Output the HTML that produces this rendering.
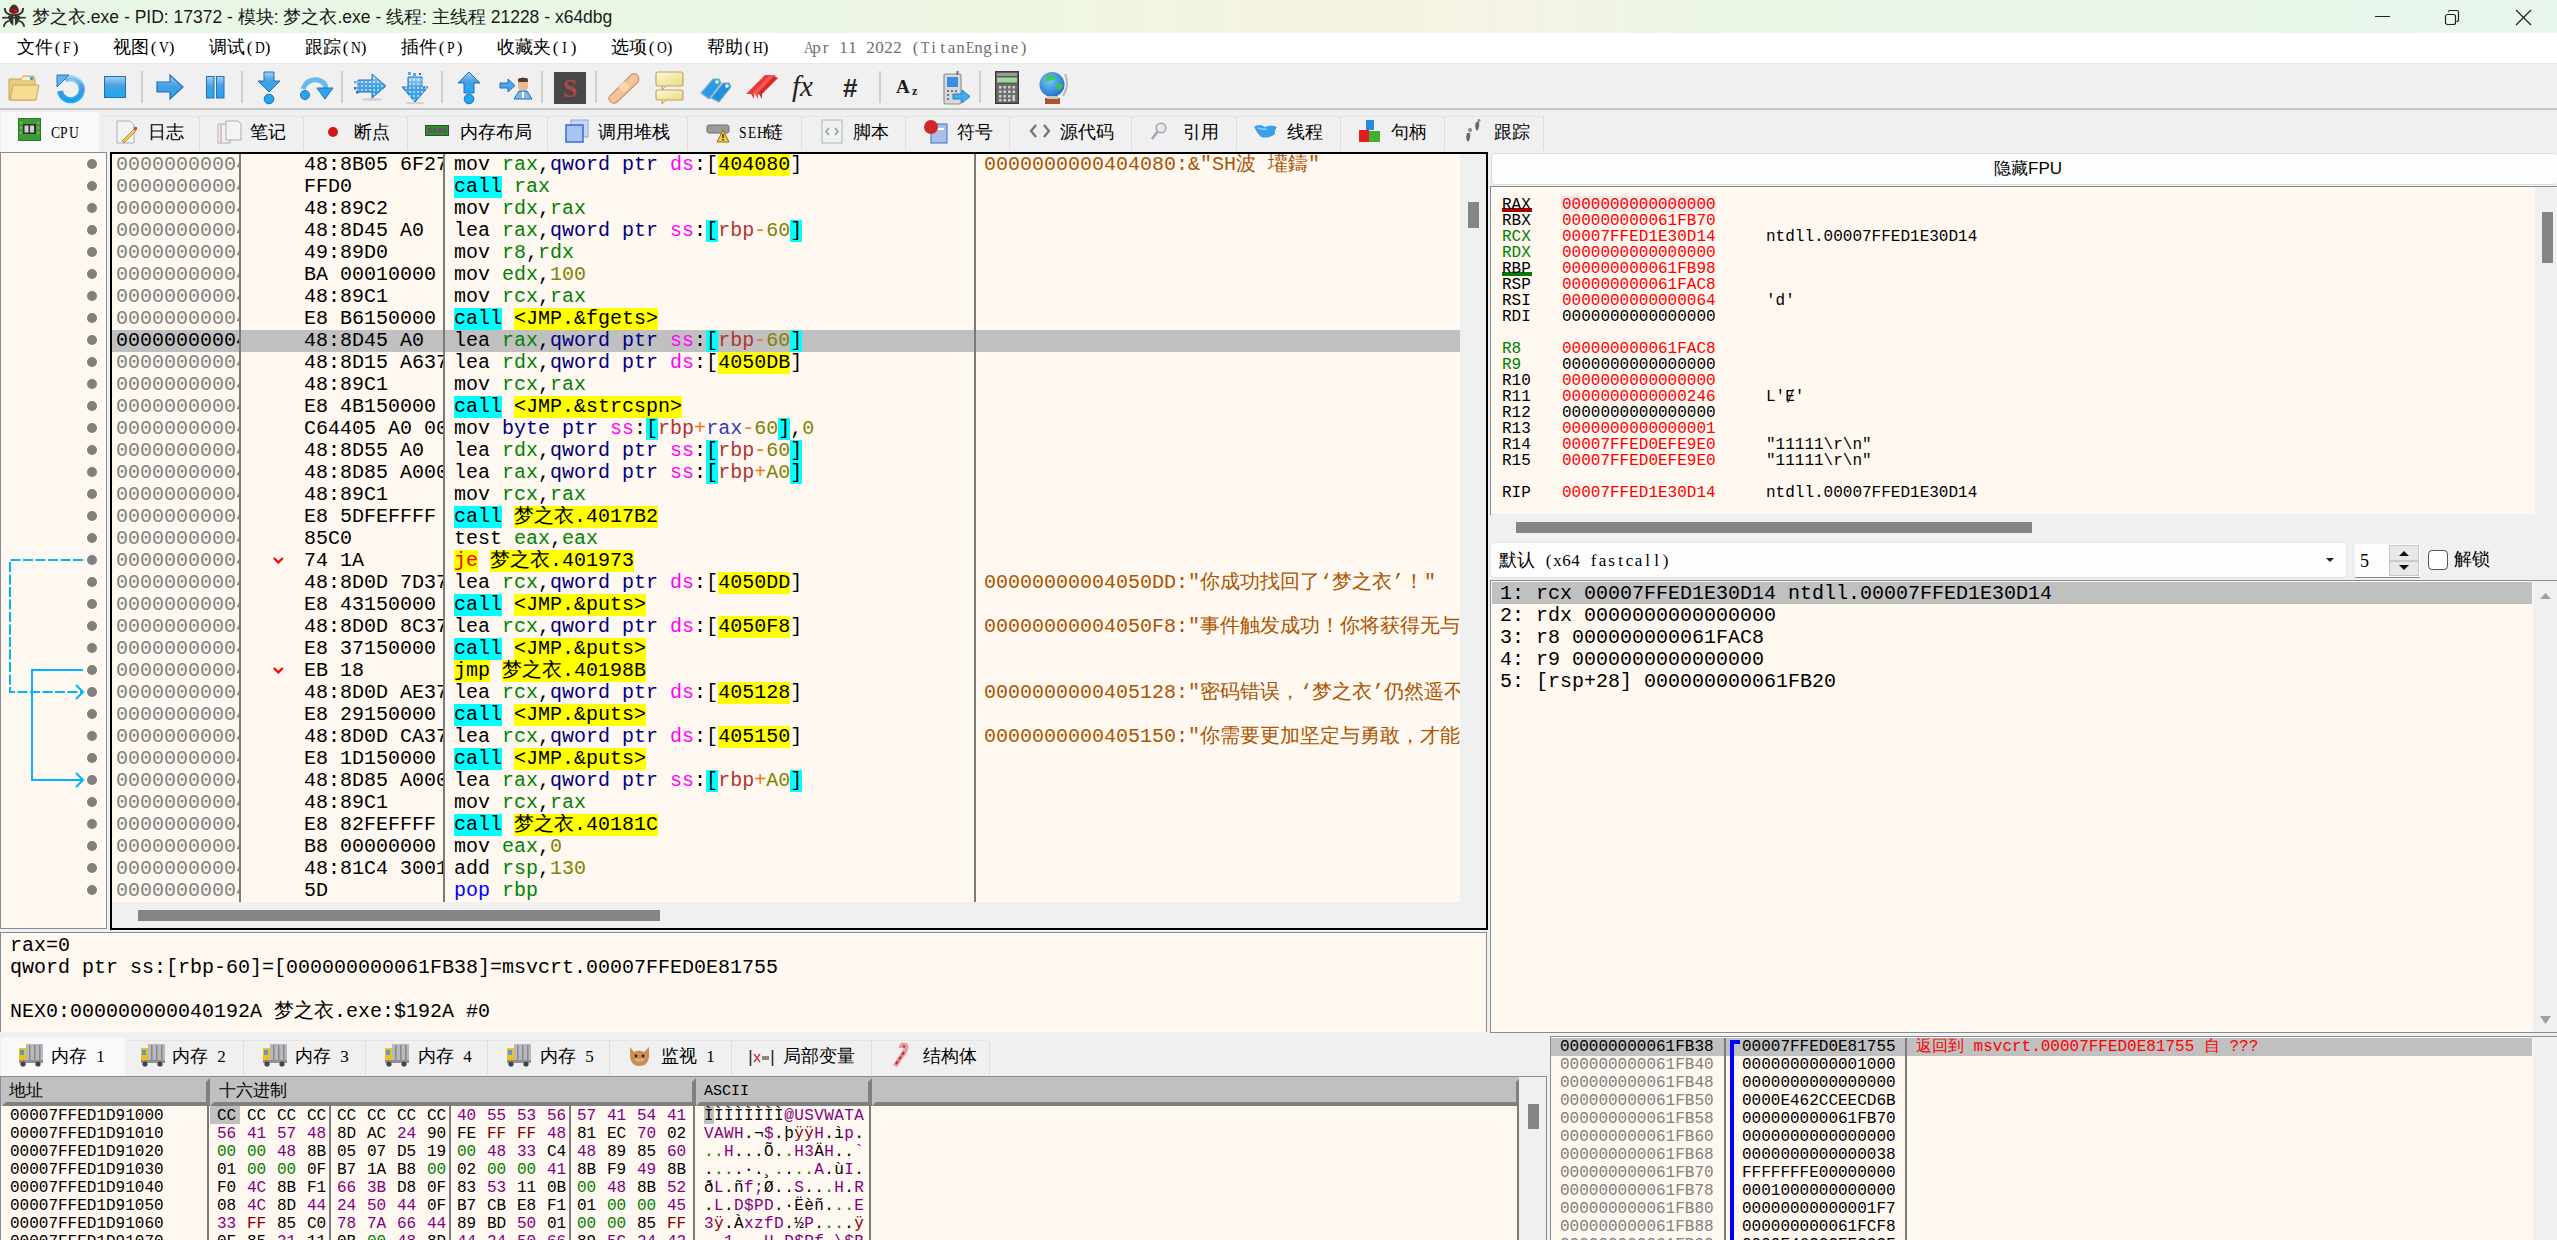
<!DOCTYPE html>
<html><head><meta charset="utf-8"><title>x64dbg</title>
<style>
html,body{margin:0;padding:0;}
body{width:2557px;height:1240px;position:relative;overflow:hidden;background:#f0f0f0;font-family:'Liberation Mono',monospace;}
body>div,body>svg{position:absolute;white-space:pre;}
svg{overflow:visible}
</style></head><body>
<div style="left:0px;top:0px;width:2557px;height:33px;background:linear-gradient(90deg,#e8f6e6 0px,#eaf7e4 640px,#eef6e1 1050px,#f6f2e0 1360px,#f4f3e4 1520px,#ebf6e6 1720px,#e8f6ec 2557px);"></div>
<svg style="left:0px;top:0px;" width="30" height="33" viewBox="0 0 30 33">
<path d="M14 4.6 Q11.5 4.8 10.2 7.2 Q9 9 9.1 10.6 Q9.6 13.9 14 13.9 Q18.4 13.9 18.9 10.6 Q19 9 17.8 7.2 Q16.5 4.8 14 4.6 Z" fill="#353535"/>
<ellipse cx="12.5" cy="11" rx="1.8" ry="2.1" fill="#e80000"/><ellipse cx="15.9" cy="10.6" rx="1.7" ry="2.1" fill="#f00000"/><circle cx="12.4" cy="11.4" r="0.6" fill="#400"/>
<path d="M4.7 8 Q5 15.2 14 15.2 Q23 15.2 23.2 8" stroke="#353535" stroke-width="2" fill="none"/>
<path d="M8 15.8 H13.3 V25.8 Q8.6 23 8 15.8 Z M14.9 15.8 H20.2 Q19.6 23 14.9 25.8 Z" fill="#353535"/>
<path d="M2.1 17.7 H25.7" stroke="#353535" stroke-width="1.7"/>
<path d="M8.8 20.8 Q4.6 22 3.8 26.8 M19.2 20.8 Q23.4 22 24.2 26.8" stroke="#353535" stroke-width="1.9" fill="none"/>
</svg>
<div style="left:32px;top:5px;font-size:17.5px;line-height:24px;color:#1a1a1a;font-family:'Liberation Sans',sans-serif;">梦之衣.exe - PID: 17372 - 模块: 梦之衣.exe - 线程: 主线程 21228 - x64dbg</div>
<svg style="left:2370px;top:8px;" width="30" height="20" viewBox="0 0 30 20"><path d="M5 8.5 H20" stroke="#222" stroke-width="1"/></svg>
<svg style="left:2440px;top:6px;" width="26" height="24" viewBox="0 0 26 24"><rect x="5.5" y="8.5" width="10" height="10" rx="2" stroke="#222" fill="none" stroke-width="1.2"/><path d="M8.5 6 Q8.5 4.5 10 4.5 H17 Q18.5 4.5 18.5 6 V13.5 Q18.5 15.5 16.5 15.5" stroke="#222" fill="none" stroke-width="1.2"/></svg>
<svg style="left:2510px;top:6px;" width="26" height="24" viewBox="0 0 26 24"><path d="M6 4 L21 19 M21 4 L6 19" stroke="#222" stroke-width="1.3"/></svg>
<div style="left:0px;top:33px;width:2557px;height:30px;background:#ffffff;"></div>
<div style="left:17px;top:36px;font-size:18px;line-height:24px;color:#000;font-family:'Liberation Mono',monospace;white-space:pre"><span style="font-size:18px">文</span><span style="font-size:18px">件</span><span style="display:inline-block;width:9px;text-align:center;font-family:'Liberation Serif',serif;font-size:17px">(</span><span style="display:inline-block;width:9px;text-align:center;font-family:'Liberation Serif',serif;font-size:17px;transform:scaleX(0.8)">F</span><span style="display:inline-block;width:9px;text-align:center;font-family:'Liberation Serif',serif;font-size:17px">)</span></div>
<div style="left:113px;top:36px;font-size:18px;line-height:24px;color:#000;font-family:'Liberation Mono',monospace;white-space:pre"><span style="font-size:18px">视</span><span style="font-size:18px">图</span><span style="display:inline-block;width:9px;text-align:center;font-family:'Liberation Serif',serif;font-size:17px">(</span><span style="display:inline-block;width:9px;text-align:center;font-family:'Liberation Serif',serif;font-size:17px;transform:scaleX(0.8)">V</span><span style="display:inline-block;width:9px;text-align:center;font-family:'Liberation Serif',serif;font-size:17px">)</span></div>
<div style="left:209px;top:36px;font-size:18px;line-height:24px;color:#000;font-family:'Liberation Mono',monospace;white-space:pre"><span style="font-size:18px">调</span><span style="font-size:18px">试</span><span style="display:inline-block;width:9px;text-align:center;font-family:'Liberation Serif',serif;font-size:17px">(</span><span style="display:inline-block;width:9px;text-align:center;font-family:'Liberation Serif',serif;font-size:17px;transform:scaleX(0.8)">D</span><span style="display:inline-block;width:9px;text-align:center;font-family:'Liberation Serif',serif;font-size:17px">)</span></div>
<div style="left:305px;top:36px;font-size:18px;line-height:24px;color:#000;font-family:'Liberation Mono',monospace;white-space:pre"><span style="font-size:18px">跟</span><span style="font-size:18px">踪</span><span style="display:inline-block;width:9px;text-align:center;font-family:'Liberation Serif',serif;font-size:17px">(</span><span style="display:inline-block;width:9px;text-align:center;font-family:'Liberation Serif',serif;font-size:17px;transform:scaleX(0.8)">N</span><span style="display:inline-block;width:9px;text-align:center;font-family:'Liberation Serif',serif;font-size:17px">)</span></div>
<div style="left:401px;top:36px;font-size:18px;line-height:24px;color:#000;font-family:'Liberation Mono',monospace;white-space:pre"><span style="font-size:18px">插</span><span style="font-size:18px">件</span><span style="display:inline-block;width:9px;text-align:center;font-family:'Liberation Serif',serif;font-size:17px">(</span><span style="display:inline-block;width:9px;text-align:center;font-family:'Liberation Serif',serif;font-size:17px;transform:scaleX(0.8)">P</span><span style="display:inline-block;width:9px;text-align:center;font-family:'Liberation Serif',serif;font-size:17px">)</span></div>
<div style="left:497px;top:36px;font-size:18px;line-height:24px;color:#000;font-family:'Liberation Mono',monospace;white-space:pre"><span style="font-size:18px">收</span><span style="font-size:18px">藏</span><span style="font-size:18px">夹</span><span style="display:inline-block;width:9px;text-align:center;font-family:'Liberation Serif',serif;font-size:17px">(</span><span style="display:inline-block;width:9px;text-align:center;font-family:'Liberation Serif',serif;font-size:17px;transform:scaleX(0.8)">I</span><span style="display:inline-block;width:9px;text-align:center;font-family:'Liberation Serif',serif;font-size:17px">)</span></div>
<div style="left:611px;top:36px;font-size:18px;line-height:24px;color:#000;font-family:'Liberation Mono',monospace;white-space:pre"><span style="font-size:18px">选</span><span style="font-size:18px">项</span><span style="display:inline-block;width:9px;text-align:center;font-family:'Liberation Serif',serif;font-size:17px">(</span><span style="display:inline-block;width:9px;text-align:center;font-family:'Liberation Serif',serif;font-size:17px;transform:scaleX(0.8)">O</span><span style="display:inline-block;width:9px;text-align:center;font-family:'Liberation Serif',serif;font-size:17px">)</span></div>
<div style="left:707px;top:36px;font-size:18px;line-height:24px;color:#000;font-family:'Liberation Mono',monospace;white-space:pre"><span style="font-size:18px">帮</span><span style="font-size:18px">助</span><span style="display:inline-block;width:9px;text-align:center;font-family:'Liberation Serif',serif;font-size:17px">(</span><span style="display:inline-block;width:9px;text-align:center;font-family:'Liberation Serif',serif;font-size:17px;transform:scaleX(0.8)">H</span><span style="display:inline-block;width:9px;text-align:center;font-family:'Liberation Serif',serif;font-size:17px">)</span></div>
<div style="left:803px;top:36px;font-size:18px;line-height:24px;color:#6e6e6e;font-family:'Liberation Mono',monospace;"><span style="display:inline-block;width:9px;text-align:center;font-family:'Liberation Serif',serif;font-size:17px;transform:scaleX(0.8)">A</span><span style="display:inline-block;width:9px;text-align:center;font-family:'Liberation Serif',serif;font-size:17px">p</span><span style="display:inline-block;width:9px;text-align:center;font-family:'Liberation Serif',serif;font-size:17px">r</span><span style="display:inline-block;width:9px;text-align:center;font-family:'Liberation Serif',serif;font-size:17px">&nbsp;</span><span style="display:inline-block;width:9px;text-align:center;font-family:'Liberation Serif',serif;font-size:17px">1</span><span style="display:inline-block;width:9px;text-align:center;font-family:'Liberation Serif',serif;font-size:17px">1</span><span style="display:inline-block;width:9px;text-align:center;font-family:'Liberation Serif',serif;font-size:17px">&nbsp;</span><span style="display:inline-block;width:9px;text-align:center;font-family:'Liberation Serif',serif;font-size:17px">2</span><span style="display:inline-block;width:9px;text-align:center;font-family:'Liberation Serif',serif;font-size:17px">0</span><span style="display:inline-block;width:9px;text-align:center;font-family:'Liberation Serif',serif;font-size:17px">2</span><span style="display:inline-block;width:9px;text-align:center;font-family:'Liberation Serif',serif;font-size:17px">2</span><span style="display:inline-block;width:9px;text-align:center;font-family:'Liberation Serif',serif;font-size:17px">&nbsp;</span><span style="display:inline-block;width:9px;text-align:center;font-family:'Liberation Serif',serif;font-size:17px">(</span><span style="display:inline-block;width:9px;text-align:center;font-family:'Liberation Serif',serif;font-size:17px;transform:scaleX(0.8)">T</span><span style="display:inline-block;width:9px;text-align:center;font-family:'Liberation Serif',serif;font-size:17px">i</span><span style="display:inline-block;width:9px;text-align:center;font-family:'Liberation Serif',serif;font-size:17px">t</span><span style="display:inline-block;width:9px;text-align:center;font-family:'Liberation Serif',serif;font-size:17px">a</span><span style="display:inline-block;width:9px;text-align:center;font-family:'Liberation Serif',serif;font-size:17px">n</span><span style="display:inline-block;width:9px;text-align:center;font-family:'Liberation Serif',serif;font-size:17px;transform:scaleX(0.8)">E</span><span style="display:inline-block;width:9px;text-align:center;font-family:'Liberation Serif',serif;font-size:17px">n</span><span style="display:inline-block;width:9px;text-align:center;font-family:'Liberation Serif',serif;font-size:17px">g</span><span style="display:inline-block;width:9px;text-align:center;font-family:'Liberation Serif',serif;font-size:17px">i</span><span style="display:inline-block;width:9px;text-align:center;font-family:'Liberation Serif',serif;font-size:17px">n</span><span style="display:inline-block;width:9px;text-align:center;font-family:'Liberation Serif',serif;font-size:17px">e</span><span style="display:inline-block;width:9px;text-align:center;font-family:'Liberation Serif',serif;font-size:17px">)</span></div>
<div style="left:0px;top:63px;width:2557px;height:1px;background:#e8e8e8;"></div>
<div style="left:0px;top:64px;width:2557px;height:45px;background:#f0f0f0;"></div>
<div style="left:0px;top:108px;width:2557px;height:2px;background:#c4c4c4;"></div>
<div style="left:0px;top:110px;width:2557px;height:42px;background:#f0f0f0;"></div>
<div style="left:0px;top:152px;width:107px;height:777px;background:#fff8f0;box-sizing:border-box;border:1px solid #868c96"></div>
<div style="left:110px;top:152px;width:1378px;height:778px;background:#fff8f0;box-sizing:border-box;border:2px solid #000"></div>
<div style="left:0px;top:932px;width:1487px;height:101px;background:#fff8f0;box-sizing:border-box;border:1px solid #868c96"></div>
<div style="left:1490px;top:152px;width:1067px;height:880px;background:#f0f0f0;"></div>
<div style="left:0px;top:1032px;width:1550px;height:45px;background:#f0f0f0;"></div>
<div style="left:1546px;top:1032px;width:1011px;height:5px;background:#f0f0f0;"></div>
<div style="left:0px;top:1076px;width:1547px;height:164px;background:#fff8f0;box-sizing:border-box;border:1px solid #868c96;border-bottom:none"></div>
<div style="left:1550px;top:1036px;width:1007px;height:204px;background:#fff8f0;box-sizing:border-box;border:1px solid #868c96;border-bottom:none;border-right:none"></div>
<svg style="left:8px;top:75px;" width="33" height="26" viewBox="0 0 33 26"><path d="M1 4 H13 L15 1 H26 V4 H27 V25 H1 Z" fill="#e9cd7e" stroke="#c9a35a" stroke-width="1"/><rect x="14" y="2" width="8" height="3" fill="#f6f0d8"/><rect x="22" y="2" width="3" height="3" fill="#39a9e8"/><path d="M5 10 H31 L28 25 H2 Z" fill="#f4dc92" stroke="#cda45c" stroke-width="1"/></svg>
<svg style="left:56px;top:74px;" width="29" height="29" viewBox="0 0 29 29"><defs><linearGradient id="bg2" x1="0" y1="0" x2="0" y2="1"><stop offset="0" stop-color="#9ad4f8"/><stop offset="0.45" stop-color="#4a9ee0"/><stop offset="1" stop-color="#18aaf8"/></linearGradient></defs><path d="M9 6 A11 11 0 1 1 4 17" stroke="url(#bg2)" stroke-width="6" fill="none"/><path d="M9 6 A11 11 0 1 1 4 17" stroke="#2a6cb8" stroke-width="0.8" fill="none" opacity="0.5"/><path d="M1 1 L13 1 L1 13 Z" fill="#62b2ee" stroke="#2f74c0" stroke-width="1"/></svg>
<svg style="left:104px;top:76px;" width="22" height="22" viewBox="0 0 22 22"><defs><linearGradient id="bg1" x1="0" y1="0" x2="0" y2="1"><stop offset="0" stop-color="#9ad4f8"/><stop offset="0.45" stop-color="#4a9ee0"/><stop offset="1" stop-color="#18aaf8"/></linearGradient></defs><rect x="0.5" y="0.5" width="21" height="21" fill="url(#bg1)" stroke="#2a6cb8"/></svg>
<div style="left:141px;top:71px;width:2px;height:32px;background:#cfcfcf;"></div>
<svg style="left:156px;top:74px;" width="29" height="26" viewBox="0 0 29 26"><defs><linearGradient id="bg3" x1="0" y1="0" x2="0" y2="1"><stop offset="0" stop-color="#9ad4f8"/><stop offset="0.45" stop-color="#4a9ee0"/><stop offset="1" stop-color="#18aaf8"/></linearGradient></defs><path d="M1 8 H14 V1 L27 13 L14 25 V18 H1 Z" fill="url(#bg3)" stroke="#2a6cb8" stroke-width="1.2"/></svg>
<svg style="left:206px;top:76px;" width="19" height="23" viewBox="0 0 19 23"><defs><linearGradient id="bg4" x1="0" y1="0" x2="0" y2="1"><stop offset="0" stop-color="#9ad4f8"/><stop offset="0.45" stop-color="#4a9ee0"/><stop offset="1" stop-color="#18aaf8"/></linearGradient></defs><rect x="0.5" y="0.5" width="7.5" height="21.5" fill="url(#bg4)" stroke="#2a6cb8"/><rect x="10.5" y="0.5" width="7.5" height="21.5" fill="url(#bg4)" stroke="#2a6cb8"/></svg>
<div style="left:241px;top:71px;width:2px;height:32px;background:#cfcfcf;"></div>
<svg style="left:257px;top:71px;" width="24" height="34" viewBox="0 0 24 34"><defs><linearGradient id="bg5" x1="0" y1="0" x2="0" y2="1"><stop offset="0" stop-color="#9ad4f8"/><stop offset="0.45" stop-color="#4a9ee0"/><stop offset="1" stop-color="#18aaf8"/></linearGradient></defs><path d="M7 1 H17 V10 H23 L12 21 L1 10 H7 Z" fill="url(#bg5)" stroke="#2a6cb8" stroke-width="1"/><circle cx="12" cy="28" r="4.8" fill="#1ea8f4" stroke="#2a6cb8" stroke-width="1"/></svg>
<svg style="left:298px;top:76px;" width="36" height="26" viewBox="0 0 36 26"><defs><linearGradient id="bg6" x1="0" y1="0" x2="0" y2="1"><stop offset="0" stop-color="#9ad4f8"/><stop offset="0.45" stop-color="#4a9ee0"/><stop offset="1" stop-color="#18aaf8"/></linearGradient></defs><path d="M5 13 Q9 2 20 4 Q28 6 28 13" stroke="#6ab8ee" stroke-width="5" fill="none"/><path d="M19 12 H35 L27 23 Z" fill="#2aa6f2" stroke="#2a6cb8" stroke-width="1"/><circle cx="7" cy="19" r="4.5" fill="#1ea8f4" stroke="#2a6cb8" stroke-width="1"/></svg>
<div style="left:341px;top:71px;width:2px;height:32px;background:#cfcfcf;"></div>
<svg style="left:353px;top:73px;" width="34" height="28" viewBox="0 0 34 28"><defs><linearGradient id="bg7" x1="0" y1="0" x2="0" y2="1"><stop offset="0" stop-color="#9ad4f8"/><stop offset="0.45" stop-color="#4a9ee0"/><stop offset="1" stop-color="#18aaf8"/></linearGradient></defs><defs><pattern id="dp1" width="4" height="4" patternUnits="userSpaceOnUse"><rect x="0" y="0" width="2" height="2" fill="#fff" opacity="0.55"/></pattern></defs><path d="M5 7 H19 V1 L33 13 L19 25 V19 H5 Z" fill="url(#bg7)" stroke="#2a6cb8" stroke-width="1"/><path d="M5 7 H19 V1 L33 13 L19 25 V19 H5 Z" fill="url(#dp1)"/><rect x="1" y="14" width="2.5" height="2.5" fill="#2a6cb8"/><rect x="3" y="18" width="2.5" height="2.5" fill="#2a6cb8"/><rect x="1" y="8" width="2.5" height="2.5" fill="#5aaae8"/><ellipse cx="19" cy="26.5" rx="11" ry="1.5" fill="#000" opacity="0.12"/></svg>
<svg style="left:401px;top:71px;" width="28" height="34" viewBox="0 0 28 34"><defs><linearGradient id="bg8" x1="0" y1="0" x2="0" y2="1"><stop offset="0" stop-color="#9ad4f8"/><stop offset="0.45" stop-color="#4a9ee0"/><stop offset="1" stop-color="#18aaf8"/></linearGradient></defs><defs><pattern id="dp2" width="4" height="4" patternUnits="userSpaceOnUse"><rect x="0" y="0" width="2" height="2" fill="#fff" opacity="0.55"/></pattern></defs><path d="M7 6 H21 V16 H27 L14 31 L1 16 H7 Z" fill="url(#bg8)" stroke="#2a6cb8" stroke-width="1"/><path d="M7 6 H21 V16 H27 L14 31 L1 16 H7 Z" fill="url(#dp2)"/><rect x="7" y="1" width="3" height="3" fill="#5aaae8"/><rect x="12" y="2" width="3" height="3" fill="#5aaae8"/><rect x="18" y="2" width="2" height="2" fill="#2a6cb8"/><ellipse cx="14" cy="32" rx="10" ry="1.3" fill="#000" opacity="0.12"/></svg>
<div style="left:441px;top:71px;width:2px;height:32px;background:#cfcfcf;"></div>
<svg style="left:457px;top:71px;" width="24" height="34" viewBox="0 0 24 34"><defs><linearGradient id="bg9" x1="0" y1="0" x2="0" y2="1"><stop offset="0" stop-color="#9ad4f8"/><stop offset="0.45" stop-color="#4a9ee0"/><stop offset="1" stop-color="#18aaf8"/></linearGradient></defs><path d="M12 1 L23 12 H17 V22 H7 V12 H1 Z" fill="url(#bg9)" stroke="#2a6cb8" stroke-width="1"/><circle cx="12" cy="28" r="4.8" fill="#1ea8f4" stroke="#2a6cb8" stroke-width="1"/></svg>
<svg style="left:499px;top:77px;" width="34" height="26" viewBox="0 0 34 26"><path d="M1 6 H9 V2 L16 8.5 L9 15 V11 H1 Z" fill="#4aa6ec" stroke="#2a6cb8" stroke-width="1"/><rect x="19" y="2" width="10" height="11" rx="3" fill="#e8b890"/><path d="M19 5 Q24 -1 29 5 V3 Q24 -2 19 3 Z" fill="#5a3a28"/><rect x="19" y="1" width="10" height="4" rx="2" fill="#5a3a28"/><path d="M15 22 L20 14 H28 L33 22 Z" fill="#7ab8ea" stroke="#2a6cb8" stroke-width="1"/><rect x="23" y="15" width="2" height="6" fill="#fff"/></svg>
<div style="left:541px;top:71px;width:2px;height:32px;background:#cfcfcf;"></div>
<svg style="left:554px;top:72px;" width="32" height="32" viewBox="0 0 32 32"><rect width="32" height="32" fill="#484848"/><text x="16" y="25" font-family="Liberation Serif" font-size="26" font-weight="bold" fill="#b34646" text-anchor="middle">S</text></svg>
<div style="left:595px;top:71px;width:2px;height:32px;background:#cfcfcf;"></div>
<svg style="left:607px;top:71px;" width="34" height="34" viewBox="0 0 34 34"><path d="M4 24 L24 4 Q29 1 31 5 Q33 9 30 12 L10 31 Q6 34 3 30 Q0 27 4 24 Z" fill="#f3c49a" stroke="#d0946a" stroke-width="1.2"/><rect x="13" y="12" width="8" height="8" transform="rotate(45 17 16)" fill="#f8dca8"/></svg>
<svg style="left:655px;top:71px;" width="30" height="34" viewBox="0 0 30 34"><defs><linearGradient id="cy" x1="0" y1="0" x2="1" y2="1"><stop offset="0" stop-color="#fdf8d8"/><stop offset="1" stop-color="#e8dc80"/></linearGradient></defs><rect x="1" y="1" width="27" height="14" rx="2" fill="url(#cy)" stroke="#c8a060" stroke-width="1.2"/><path d="M7 15 L7 19 L11 15" fill="#e8dc90" stroke="#c8a060"/><rect x="1" y="19" width="27" height="10" rx="2" fill="url(#cy)" stroke="#c8a060" stroke-width="1.2"/><path d="M7 29 L7 33 L11 29" fill="#e8dc90" stroke="#c8a060"/></svg>
<svg style="left:699px;top:73px;" width="34" height="30" viewBox="0 0 34 30"><path d="M2 20 L14 6 L20 6 L22 10 L10 26 Z" fill="#2a9ae8" stroke="#8ab0c0" stroke-width="1.2"/><path d="M12 25 L24 10 L30 10 L32 14 L20 29 Z" fill="#1e90e0" stroke="#8ab0c0" stroke-width="1.2"/><circle cx="18" cy="9" r="1.8" fill="#fff"/><circle cx="28" cy="13" r="1.8" fill="#fff"/></svg>
<svg style="left:745px;top:73px;" width="34" height="28" viewBox="0 0 34 28"><path d="M1 21 L20 2 L26 2 L9 21 L9 26 L6 21 Z" fill="#e83a3a"/><path d="M7 21 L25 2 L31 2 L13 21 L13 26 L10 21 Z" fill="#f05a5a"/><path d="M12 21 L29 3 L33 5 L17 21 L17 26 L14 21 Z" fill="#d82828"/></svg>
<div style="left:792px;top:70px;font-size:29px;line-height:32px;color:#222;font-family:'Liberation Serif',serif;font-style:italic">fx</div>
<div style="left:843px;top:73px;font-size:26px;line-height:30px;color:#2a2a2a;font-family:'Liberation Sans',sans-serif;font-weight:bold">#</div>
<div style="left:879px;top:71px;width:2px;height:32px;background:#cfcfcf;"></div>
<div style="left:896px;top:76px;font-size:19px;line-height:22px;color:#1a1a1a;font-family:'Liberation Serif',serif;font-weight:bold">A</div>
<div style="left:912px;top:84px;font-size:12px;line-height:14px;color:#1a1a1a;font-family:'Liberation Serif',serif;font-weight:bold">z</div>
<svg style="left:941px;top:71px;" width="31" height="34" viewBox="0 0 31 34"><rect x="3" y="3" width="17" height="30" rx="1.5" fill="#d8d8d8" stroke="#909090" stroke-width="1.2"/><rect x="15.5" y="0" width="2" height="4" fill="#707070"/><rect x="6" y="6" width="11" height="10" fill="#3a8ee0"/><g fill="#777"><rect x="6" y="19" width="2" height="2"/><rect x="10" y="19" width="2" height="2"/><rect x="14" y="19" width="2" height="2"/><rect x="6" y="23" width="2" height="2"/><rect x="6" y="27" width="2" height="2"/></g><path d="M12 23 H21 V19 L29 25.5 L21 32 V28 H12 Z" fill="#38b2f4" stroke="#2a7ac8" stroke-width="1"/></svg>
<div style="left:979px;top:71px;width:2px;height:32px;background:#cfcfcf;"></div>
<svg style="left:995px;top:71px;" width="24" height="34" viewBox="0 0 24 34"><rect x="0.5" y="0.5" width="23" height="32" fill="#5a5a5a" stroke="#3a3a3a"/><rect x="2" y="2" width="20" height="3" fill="#999"/><rect x="2" y="6.5" width="20" height="5" fill="#9ed89a"/><rect x="2" y="13" width="20" height="18" fill="#6e6e6e"/><g fill="#cfcfcf"><rect x="4" y="15" width="2.5" height="2.5"/><rect x="8.5" y="15" width="2.5" height="2.5"/><rect x="13" y="15" width="2.5" height="2.5"/><rect x="17.5" y="15" width="2.5" height="2.5"/><rect x="4" y="19.5" width="2.5" height="2.5"/><rect x="8.5" y="19.5" width="2.5" height="2.5"/><rect x="13" y="19.5" width="2.5" height="2.5"/><rect x="17.5" y="19.5" width="2.5" height="2.5"/><rect x="4" y="24" width="2.5" height="2.5"/><rect x="8.5" y="24" width="2.5" height="2.5"/><rect x="13" y="24" width="2.5" height="2.5"/><rect x="17.5" y="24" width="2.5" height="6"/><rect x="4" y="28" width="2.5" height="2.5"/><rect x="8.5" y="28" width="2.5" height="2.5"/><rect x="13" y="28" width="2.5" height="2.5"/></g></svg>
<svg style="left:1039px;top:71px;" width="31" height="34" viewBox="0 0 31 34"><defs><radialGradient id="gl" cx="0.4" cy="0.35" r="0.7"><stop offset="0" stop-color="#7ac8f8"/><stop offset="1" stop-color="#1a6cc8"/></radialGradient></defs><path d="M26 3 Q31 14 24 25" stroke="#b8b8b8" stroke-width="2" fill="none"/><circle cx="13" cy="13.5" r="12.5" fill="url(#gl)"/><path d="M8 4 Q14 3 18 6 Q16 10 12 9 Q9 12 6 10 Z M17 12 Q22 11 24 15 Q22 20 18 19 Z" fill="#3cc84a" opacity="0.85"/><rect x="6" y="27" width="15" height="6" fill="#a8562a"/><rect x="8" y="25" width="11" height="3" fill="#c8c8c8"/></svg>
<div style="left:1px;top:112px;width:98px;height:40px;background:#f9f9f9;border-radius:3px 3px 0 0"></div>
<div style="left:50px;top:121px;font-size:18px;line-height:24px;color:#000;font-family:'Liberation Mono',monospace;"><span style="display:inline-block;width:9px;text-align:center;font-family:'Liberation Serif',serif;font-size:17px;transform:scaleX(0.8)">C</span><span style="display:inline-block;width:9px;text-align:center;font-family:'Liberation Serif',serif;font-size:17px;transform:scaleX(0.8)">P</span><span style="display:inline-block;width:9px;text-align:center;font-family:'Liberation Serif',serif;font-size:17px;transform:scaleX(0.8)">U</span></div>
<div style="left:199px;top:116px;width:1px;height:34px;background:#dddddd;"></div>
<div style="left:99px;top:116px;width:100px;height:1px;background:#e6e6e6;"></div>
<div style="left:148px;top:121px;font-size:18px;line-height:24px;color:#000;font-family:'Liberation Mono',monospace;"><span style="font-size:18px">日</span><span style="font-size:18px">志</span></div>
<div style="left:303px;top:116px;width:1px;height:34px;background:#dddddd;"></div>
<div style="left:199px;top:116px;width:104px;height:1px;background:#e6e6e6;"></div>
<div style="left:250px;top:121px;font-size:18px;line-height:24px;color:#000;font-family:'Liberation Mono',monospace;"><span style="font-size:18px">笔</span><span style="font-size:18px">记</span></div>
<div style="left:407px;top:116px;width:1px;height:34px;background:#dddddd;"></div>
<div style="left:303px;top:116px;width:104px;height:1px;background:#e6e6e6;"></div>
<div style="left:354px;top:121px;font-size:18px;line-height:24px;color:#000;font-family:'Liberation Mono',monospace;"><span style="font-size:18px">断</span><span style="font-size:18px">点</span></div>
<div style="left:547px;top:116px;width:1px;height:34px;background:#dddddd;"></div>
<div style="left:407px;top:116px;width:140px;height:1px;background:#e6e6e6;"></div>
<div style="left:460px;top:121px;font-size:18px;line-height:24px;color:#000;font-family:'Liberation Mono',monospace;"><span style="font-size:18px">内</span><span style="font-size:18px">存</span><span style="font-size:18px">布</span><span style="font-size:18px">局</span></div>
<div style="left:687px;top:116px;width:1px;height:34px;background:#dddddd;"></div>
<div style="left:547px;top:116px;width:140px;height:1px;background:#e6e6e6;"></div>
<div style="left:598px;top:121px;font-size:18px;line-height:24px;color:#000;font-family:'Liberation Mono',monospace;"><span style="font-size:18px">调</span><span style="font-size:18px">用</span><span style="font-size:18px">堆</span><span style="font-size:18px">栈</span></div>
<div style="left:801px;top:116px;width:1px;height:34px;background:#dddddd;"></div>
<div style="left:687px;top:116px;width:114px;height:1px;background:#e6e6e6;"></div>
<div style="left:738px;top:121px;font-size:18px;line-height:24px;color:#000;font-family:'Liberation Mono',monospace;"><span style="display:inline-block;width:9px;text-align:center;font-family:'Liberation Serif',serif;font-size:17px;transform:scaleX(0.8)">S</span><span style="display:inline-block;width:9px;text-align:center;font-family:'Liberation Serif',serif;font-size:17px;transform:scaleX(0.8)">E</span><span style="display:inline-block;width:9px;text-align:center;font-family:'Liberation Serif',serif;font-size:17px;transform:scaleX(0.8)">H</span><span style="font-size:18px">链</span></div>
<div style="left:905px;top:116px;width:1px;height:34px;background:#dddddd;"></div>
<div style="left:801px;top:116px;width:104px;height:1px;background:#e6e6e6;"></div>
<div style="left:853px;top:121px;font-size:18px;line-height:24px;color:#000;font-family:'Liberation Mono',monospace;"><span style="font-size:18px">脚</span><span style="font-size:18px">本</span></div>
<div style="left:1009px;top:116px;width:1px;height:34px;background:#dddddd;"></div>
<div style="left:905px;top:116px;width:104px;height:1px;background:#e6e6e6;"></div>
<div style="left:957px;top:121px;font-size:18px;line-height:24px;color:#000;font-family:'Liberation Mono',monospace;"><span style="font-size:18px">符</span><span style="font-size:18px">号</span></div>
<div style="left:1131px;top:116px;width:1px;height:34px;background:#dddddd;"></div>
<div style="left:1009px;top:116px;width:122px;height:1px;background:#e6e6e6;"></div>
<div style="left:1060px;top:121px;font-size:18px;line-height:24px;color:#000;font-family:'Liberation Mono',monospace;"><span style="font-size:18px">源</span><span style="font-size:18px">代</span><span style="font-size:18px">码</span></div>
<div style="left:1236px;top:116px;width:1px;height:34px;background:#dddddd;"></div>
<div style="left:1131px;top:116px;width:105px;height:1px;background:#e6e6e6;"></div>
<div style="left:1183px;top:121px;font-size:18px;line-height:24px;color:#000;font-family:'Liberation Mono',monospace;"><span style="font-size:18px">引</span><span style="font-size:18px">用</span></div>
<div style="left:1340px;top:116px;width:1px;height:34px;background:#dddddd;"></div>
<div style="left:1236px;top:116px;width:104px;height:1px;background:#e6e6e6;"></div>
<div style="left:1287px;top:121px;font-size:18px;line-height:24px;color:#000;font-family:'Liberation Mono',monospace;"><span style="font-size:18px">线</span><span style="font-size:18px">程</span></div>
<div style="left:1444px;top:116px;width:1px;height:34px;background:#dddddd;"></div>
<div style="left:1340px;top:116px;width:104px;height:1px;background:#e6e6e6;"></div>
<div style="left:1391px;top:121px;font-size:18px;line-height:24px;color:#000;font-family:'Liberation Mono',monospace;"><span style="font-size:18px">句</span><span style="font-size:18px">柄</span></div>
<div style="left:1543px;top:116px;width:1px;height:34px;background:#dddddd;"></div>
<div style="left:1444px;top:116px;width:99px;height:1px;background:#e6e6e6;"></div>
<div style="left:1494px;top:121px;font-size:18px;line-height:24px;color:#000;font-family:'Liberation Mono',monospace;"><span style="font-size:18px">跟</span><span style="font-size:18px">踪</span></div>
<svg style="left:18px;top:118px;" width="23" height="23" viewBox="0 0 23 23"><rect x="0.5" y="0.5" width="22" height="22" fill="#3d9c3a" stroke="#2a7a2a"/><g fill="#d8c040"><rect x="2" y="4" width="1.5" height="1.5"/><rect x="2" y="9" width="1.5" height="1.5"/><rect x="2" y="14" width="1.5" height="1.5"/><rect x="19.5" y="4" width="1.5" height="1.5"/><rect x="19.5" y="9" width="1.5" height="1.5"/><rect x="19.5" y="14" width="1.5" height="1.5"/></g><rect x="5" y="6" width="13" height="10" fill="#303030"/><rect x="6.5" y="7.5" width="4" height="7" fill="#cfcfcf"/><rect x="12" y="7.5" width="4" height="7" fill="#cfcfcf"/></svg>
<svg style="left:115px;top:120px;" width="24" height="24" viewBox="0 0 24 24"><path d="M2 1 H15 L19 5 V23 H2 Z" fill="#f2f4f4" stroke="#a8b0b0" stroke-width="1"/><path d="M7 21 L19 9 L21 11 L9 23 Z" fill="#e8c850" stroke="#a08830" stroke-width="0.8"/><rect x="19" y="7" width="3" height="3" fill="#e04040"/></svg>
<svg style="left:217px;top:120px;" width="25" height="24" viewBox="0 0 25 24"><path d="M1 4 H13 V23 H1 Z" fill="#eef0f4" stroke="#a8b0b0"/><path d="M9 1 H21 L24 4 V20 H9 Z" fill="#f4f4f6" stroke="#a8b0b0"/><path d="M4 5 V22" stroke="#e08080" stroke-width="1"/></svg>
<svg style="left:327px;top:126px;" width="12" height="12" viewBox="0 0 12 12"><circle cx="6" cy="6" r="5" fill="#d01a1a"/></svg>
<svg style="left:425px;top:125px;" width="24" height="11" viewBox="0 0 24 11"><rect x="0.5" y="0.5" width="23" height="10" fill="#2f8a2f" stroke="#1f5a1f"/><g fill="#5a5a5a"><rect x="3" y="3" width="4" height="5"/><rect x="8" y="3" width="4" height="5"/><rect x="13" y="3" width="4" height="5"/><rect x="18" y="3" width="3" height="5"/></g></svg>
<svg style="left:565px;top:119px;" width="24" height="24" viewBox="0 0 24 24"><rect x="6" y="1" width="17" height="17" fill="#c8d8f0" stroke="#8aa8d8"/><rect x="1" y="6" width="17" height="17" fill="#a8c4f0" stroke="#3a6ad8" stroke-width="1.5"/></svg>
<svg style="left:706px;top:122px;" width="25" height="22" viewBox="0 0 25 22"><rect x="1" y="3" width="22" height="8" rx="2" fill="#9a9a9a" stroke="#707070"/><path d="M11 20 L17 8 L23 20 Z" fill="#f0d030" stroke="#907010"/><rect x="16.3" y="12" width="1.4" height="4" fill="#222"/><rect x="16.3" y="17" width="1.4" height="1.5" fill="#222"/></svg>
<svg style="left:820px;top:119px;" width="24" height="25" viewBox="0 0 24 25"><rect x="2" y="1" width="20" height="23" fill="#eef2f2" stroke="#b0b8b8"/><path d="M9 9 L6 12.5 L9 16 M15 9 L18 12.5 L15 16" stroke="#909898" stroke-width="1.5" fill="none"/></svg>
<svg style="left:923px;top:119px;" width="25" height="25" viewBox="0 0 25 25"><rect x="8" y="5" width="16" height="19" fill="#a8c0e8" stroke="#4070c0"/><rect x="11" y="9" width="10" height="2" fill="#fff"/><circle cx="8" cy="8" r="7" fill="#d02828"/></svg>
<svg style="left:1030px;top:123px;" width="20" height="16" viewBox="0 0 20 16"><path d="M6 2 L1 8 L6 14 M14 2 L19 8 L14 14" stroke="#707070" stroke-width="2.2" fill="none"/></svg>
<svg style="left:1151px;top:122px;" width="16" height="20" viewBox="0 0 16 20"><circle cx="10" cy="6" r="4.8" fill="#e4eaf0" stroke="#a0a8b0" stroke-width="1.6"/><path d="M6.5 9.5 L1 17" stroke="#a0a8b0" stroke-width="2.6"/></svg>
<svg style="left:1253px;top:121px;" width="26" height="22" viewBox="0 0 26 22"><path d="M1 6 Q6 2 12 6 Q18 3 24 6 Q21 10 22 13 Q16 18 8 16 Q4 12 1 6 Z" fill="#3aa0e8"/><path d="M5 7 Q10 9 14 8" stroke="#8ad0f8" stroke-width="1.5" fill="none"/></svg>
<svg style="left:1358px;top:119px;" width="23" height="24" viewBox="0 0 23 24"><rect x="8" y="1" width="8" height="10" fill="#2a88e0"/><rect x="1" y="11" width="10" height="12" fill="#e02020"/><rect x="11" y="12" width="11" height="11" fill="#44b030"/></svg>
<svg style="left:1463px;top:119px;" width="22" height="24" viewBox="0 0 22 24"><path d="M4 14 Q2 20 5 23 Q8 20 7 14 Z M13 3 Q11 9 14 12 Q17 9 16 3 Z" fill="#6a6a6a"/><circle cx="7" cy="11" r="2" fill="#8a8a8a"/><circle cx="16" cy="1.5" r="1.5" fill="#8a8a8a"/></svg>
<div style="left:1px;top:1037px;width:124px;height:39px;background:#f9f9f9;border-radius:3px 3px 0 0"></div>
<div style="left:51px;top:1045px;font-size:18px;line-height:24px;color:#000;font-family:'Liberation Mono',monospace;"><span style="font-size:18px">内</span><span style="font-size:18px">存</span><span style="display:inline-block;width:9px;text-align:center;font-family:'Liberation Serif',serif;font-size:17px">&nbsp;</span><span style="display:inline-block;width:9px;text-align:center;font-family:'Liberation Serif',serif;font-size:17px">1</span></div>
<div style="left:243px;top:1041px;width:1px;height:34px;background:#dddddd;"></div>
<div style="left:125px;top:1040px;width:118px;height:1px;background:#e6e6e6;"></div>
<div style="left:172px;top:1045px;font-size:18px;line-height:24px;color:#000;font-family:'Liberation Mono',monospace;"><span style="font-size:18px">内</span><span style="font-size:18px">存</span><span style="display:inline-block;width:9px;text-align:center;font-family:'Liberation Serif',serif;font-size:17px">&nbsp;</span><span style="display:inline-block;width:9px;text-align:center;font-family:'Liberation Serif',serif;font-size:17px">2</span></div>
<div style="left:365px;top:1041px;width:1px;height:34px;background:#dddddd;"></div>
<div style="left:243px;top:1040px;width:122px;height:1px;background:#e6e6e6;"></div>
<div style="left:295px;top:1045px;font-size:18px;line-height:24px;color:#000;font-family:'Liberation Mono',monospace;"><span style="font-size:18px">内</span><span style="font-size:18px">存</span><span style="display:inline-block;width:9px;text-align:center;font-family:'Liberation Serif',serif;font-size:17px">&nbsp;</span><span style="display:inline-block;width:9px;text-align:center;font-family:'Liberation Serif',serif;font-size:17px">3</span></div>
<div style="left:487px;top:1041px;width:1px;height:34px;background:#dddddd;"></div>
<div style="left:365px;top:1040px;width:122px;height:1px;background:#e6e6e6;"></div>
<div style="left:418px;top:1045px;font-size:18px;line-height:24px;color:#000;font-family:'Liberation Mono',monospace;"><span style="font-size:18px">内</span><span style="font-size:18px">存</span><span style="display:inline-block;width:9px;text-align:center;font-family:'Liberation Serif',serif;font-size:17px">&nbsp;</span><span style="display:inline-block;width:9px;text-align:center;font-family:'Liberation Serif',serif;font-size:17px">4</span></div>
<div style="left:609px;top:1041px;width:1px;height:34px;background:#dddddd;"></div>
<div style="left:487px;top:1040px;width:122px;height:1px;background:#e6e6e6;"></div>
<div style="left:540px;top:1045px;font-size:18px;line-height:24px;color:#000;font-family:'Liberation Mono',monospace;"><span style="font-size:18px">内</span><span style="font-size:18px">存</span><span style="display:inline-block;width:9px;text-align:center;font-family:'Liberation Serif',serif;font-size:17px">&nbsp;</span><span style="display:inline-block;width:9px;text-align:center;font-family:'Liberation Serif',serif;font-size:17px">5</span></div>
<div style="left:731px;top:1041px;width:1px;height:34px;background:#dddddd;"></div>
<div style="left:609px;top:1040px;width:122px;height:1px;background:#e6e6e6;"></div>
<div style="left:661px;top:1045px;font-size:18px;line-height:24px;color:#000;font-family:'Liberation Mono',monospace;"><span style="font-size:18px">监</span><span style="font-size:18px">视</span><span style="display:inline-block;width:9px;text-align:center;font-family:'Liberation Serif',serif;font-size:17px">&nbsp;</span><span style="display:inline-block;width:9px;text-align:center;font-family:'Liberation Serif',serif;font-size:17px">1</span></div>
<div style="left:871px;top:1041px;width:1px;height:34px;background:#dddddd;"></div>
<div style="left:731px;top:1040px;width:140px;height:1px;background:#e6e6e6;"></div>
<div style="left:783px;top:1045px;font-size:18px;line-height:24px;color:#000;font-family:'Liberation Mono',monospace;"><span style="font-size:18px">局</span><span style="font-size:18px">部</span><span style="font-size:18px">变</span><span style="font-size:18px">量</span></div>
<div style="left:989px;top:1041px;width:1px;height:34px;background:#dddddd;"></div>
<div style="left:871px;top:1040px;width:118px;height:1px;background:#e6e6e6;"></div>
<div style="left:923px;top:1045px;font-size:18px;line-height:24px;color:#000;font-family:'Liberation Mono',monospace;"><span style="font-size:18px">结</span><span style="font-size:18px">构</span><span style="font-size:18px">体</span></div>
<svg style="left:18px;top:1044px;" width="26" height="24" viewBox="0 0 26 24"><rect x="1" y="4" width="7" height="13" fill="#f0c020"/><rect x="2" y="6" width="4" height="5" fill="#5a9ad0"/><rect x="8" y="0" width="17" height="17" fill="#b8b8c0"/><g fill="#888"><rect x="11" y="1" width="1.5" height="15"/><rect x="16" y="1" width="1.5" height="15"/><rect x="21" y="1" width="1.5" height="15"/></g><rect x="1" y="16" width="24" height="3" fill="#909090"/><circle cx="5" cy="20" r="2.6" fill="#444"/><circle cx="20" cy="20" r="2.6" fill="#444"/></svg>
<svg style="left:140px;top:1044px;" width="26" height="24" viewBox="0 0 26 24"><rect x="1" y="4" width="7" height="13" fill="#f0c020"/><rect x="2" y="6" width="4" height="5" fill="#5a9ad0"/><rect x="8" y="0" width="17" height="17" fill="#b8b8c0"/><g fill="#888"><rect x="11" y="1" width="1.5" height="15"/><rect x="16" y="1" width="1.5" height="15"/><rect x="21" y="1" width="1.5" height="15"/></g><rect x="1" y="16" width="24" height="3" fill="#909090"/><circle cx="5" cy="20" r="2.6" fill="#444"/><circle cx="20" cy="20" r="2.6" fill="#444"/></svg>
<svg style="left:262px;top:1044px;" width="26" height="24" viewBox="0 0 26 24"><rect x="1" y="4" width="7" height="13" fill="#f0c020"/><rect x="2" y="6" width="4" height="5" fill="#5a9ad0"/><rect x="8" y="0" width="17" height="17" fill="#b8b8c0"/><g fill="#888"><rect x="11" y="1" width="1.5" height="15"/><rect x="16" y="1" width="1.5" height="15"/><rect x="21" y="1" width="1.5" height="15"/></g><rect x="1" y="16" width="24" height="3" fill="#909090"/><circle cx="5" cy="20" r="2.6" fill="#444"/><circle cx="20" cy="20" r="2.6" fill="#444"/></svg>
<svg style="left:384px;top:1044px;" width="26" height="24" viewBox="0 0 26 24"><rect x="1" y="4" width="7" height="13" fill="#f0c020"/><rect x="2" y="6" width="4" height="5" fill="#5a9ad0"/><rect x="8" y="0" width="17" height="17" fill="#b8b8c0"/><g fill="#888"><rect x="11" y="1" width="1.5" height="15"/><rect x="16" y="1" width="1.5" height="15"/><rect x="21" y="1" width="1.5" height="15"/></g><rect x="1" y="16" width="24" height="3" fill="#909090"/><circle cx="5" cy="20" r="2.6" fill="#444"/><circle cx="20" cy="20" r="2.6" fill="#444"/></svg>
<svg style="left:506px;top:1044px;" width="26" height="24" viewBox="0 0 26 24"><rect x="1" y="4" width="7" height="13" fill="#f0c020"/><rect x="2" y="6" width="4" height="5" fill="#5a9ad0"/><rect x="8" y="0" width="17" height="17" fill="#b8b8c0"/><g fill="#888"><rect x="11" y="1" width="1.5" height="15"/><rect x="16" y="1" width="1.5" height="15"/><rect x="21" y="1" width="1.5" height="15"/></g><rect x="1" y="16" width="24" height="3" fill="#909090"/><circle cx="5" cy="20" r="2.6" fill="#444"/><circle cx="20" cy="20" r="2.6" fill="#444"/></svg>
<svg style="left:628px;top:1044px;" width="23" height="23" viewBox="0 0 23 23"><path d="M2 3 L6 8 Q11 5 16 8 L21 3 L21 13 Q20 22 11.5 22 Q3 22 2 13 Z" fill="#c89050"/><circle cx="8" cy="12" r="1.4" fill="#222"/><circle cx="15" cy="12" r="1.4" fill="#222"/><path d="M10 16 Q11.5 18 13 16" stroke="#222" fill="none"/><path d="M6 15 Q11 21 17 15" fill="#f0e0c0" opacity="0.6"/></svg>
<svg style="left:749px;top:1050px;" width="25" height="16" viewBox="0 0 25 16"><path d="M1.5 0 V16 M23.5 0 V16" stroke="#333" stroke-width="1.6"/><path d="M5 4 L11 12 M11 4 L5 12" stroke="#c04040" stroke-width="1.4"/><rect x="13" y="6" width="7" height="4" fill="#888"/></svg>
<svg style="left:891px;top:1043px;" width="21" height="25" viewBox="0 0 21 25"><path d="M4 23 L14 8 Q17 2 13 2 Q10 2 10 5" stroke="#e0a0a0" stroke-width="4.5" fill="none"/><path d="M5 21 L7 18 M8 16.5 L10 13.5 M11 12 L13 9 M14 4 L12 3" stroke="#d02828" stroke-width="2.2"/></svg>
<div style="left:112px;top:330px;width:1348px;height:22px;background:#c0c0c0;"></div>
<div style="left:112px;top:154px;width:127px;height:22px;overflow:hidden;font-size:20px;line-height:22px;color:#808080"><span style="margin-left:4px">0000000000401800</span></div>
<div style="left:245px;top:154px;width:200px;height:22px;overflow:hidden;font-size:20px;line-height:22px;color:#000"><span style="margin-left:59px">48:8B05 6F27</span></div>
<div style="left:454px;top:154px;width:520px;height:22px;overflow:hidden;font-size:20px;line-height:22px"><span style="color:#000">mov </span><span style="color:#008300">rax</span><span style="color:#000">,</span><span style="color:#000080">qword ptr </span><span style="color:#ff00ff">ds</span><span style="color:#000">:</span><span style="color:#000">[</span><span style="color:#000;background:#ffff00">404080</span><span style="color:#000">]</span></div>
<div style="left:984px;top:154px;width:476px;height:22px;overflow:hidden;font-size:20px;line-height:22px;color:#aa5500">0000000000404080:&amp;"SH波 壦鑄"</div>
<div style="left:87px;top:159px;width:10px;height:10px;border-radius:50%;background:#808080"></div>
<div style="left:112px;top:176px;width:127px;height:22px;overflow:hidden;font-size:20px;line-height:22px;color:#808080"><span style="margin-left:4px">0000000000401801</span></div>
<div style="left:245px;top:176px;width:200px;height:22px;overflow:hidden;font-size:20px;line-height:22px;color:#000"><span style="margin-left:59px">FFD0</span></div>
<div style="left:454px;top:176px;width:520px;height:22px;overflow:hidden;font-size:20px;line-height:22px"><span style="color:#000;background:#00ffff">call</span><span style="color:#000"> </span><span style="color:#008300">rax</span></div>
<div style="left:87px;top:181px;width:10px;height:10px;border-radius:50%;background:#808080"></div>
<div style="left:112px;top:198px;width:127px;height:22px;overflow:hidden;font-size:20px;line-height:22px;color:#808080"><span style="margin-left:4px">0000000000401802</span></div>
<div style="left:245px;top:198px;width:200px;height:22px;overflow:hidden;font-size:20px;line-height:22px;color:#000"><span style="margin-left:59px">48:89C2</span></div>
<div style="left:454px;top:198px;width:520px;height:22px;overflow:hidden;font-size:20px;line-height:22px"><span style="color:#000">mov </span><span style="color:#008300">rdx</span><span style="color:#000">,</span><span style="color:#008300">rax</span></div>
<div style="left:87px;top:203px;width:10px;height:10px;border-radius:50%;background:#808080"></div>
<div style="left:112px;top:220px;width:127px;height:22px;overflow:hidden;font-size:20px;line-height:22px;color:#808080"><span style="margin-left:4px">0000000000401803</span></div>
<div style="left:245px;top:220px;width:200px;height:22px;overflow:hidden;font-size:20px;line-height:22px;color:#000"><span style="margin-left:59px">48:8D45 A0</span></div>
<div style="left:454px;top:220px;width:520px;height:22px;overflow:hidden;font-size:20px;line-height:22px"><span style="color:#000">lea </span><span style="color:#008300">rax</span><span style="color:#000">,</span><span style="color:#000080">qword ptr </span><span style="color:#ff00ff">ss</span><span style="color:#000">:</span><span style="color:#000;background:#00ffff">[</span><span style="color:#b03434">rbp</span><span style="color:#f27711">-</span><span style="color:#828200">60</span><span style="color:#000;background:#00ffff">]</span></div>
<div style="left:87px;top:225px;width:10px;height:10px;border-radius:50%;background:#808080"></div>
<div style="left:112px;top:242px;width:127px;height:22px;overflow:hidden;font-size:20px;line-height:22px;color:#808080"><span style="margin-left:4px">0000000000401804</span></div>
<div style="left:245px;top:242px;width:200px;height:22px;overflow:hidden;font-size:20px;line-height:22px;color:#000"><span style="margin-left:59px">49:89D0</span></div>
<div style="left:454px;top:242px;width:520px;height:22px;overflow:hidden;font-size:20px;line-height:22px"><span style="color:#000">mov </span><span style="color:#008300">r8</span><span style="color:#000">,</span><span style="color:#008300">rdx</span></div>
<div style="left:87px;top:247px;width:10px;height:10px;border-radius:50%;background:#808080"></div>
<div style="left:112px;top:264px;width:127px;height:22px;overflow:hidden;font-size:20px;line-height:22px;color:#808080"><span style="margin-left:4px">0000000000401805</span></div>
<div style="left:245px;top:264px;width:200px;height:22px;overflow:hidden;font-size:20px;line-height:22px;color:#000"><span style="margin-left:59px">BA 00010000</span></div>
<div style="left:454px;top:264px;width:520px;height:22px;overflow:hidden;font-size:20px;line-height:22px"><span style="color:#000">mov </span><span style="color:#008300">edx</span><span style="color:#000">,</span><span style="color:#828200">100</span></div>
<div style="left:87px;top:269px;width:10px;height:10px;border-radius:50%;background:#808080"></div>
<div style="left:112px;top:286px;width:127px;height:22px;overflow:hidden;font-size:20px;line-height:22px;color:#808080"><span style="margin-left:4px">0000000000401806</span></div>
<div style="left:245px;top:286px;width:200px;height:22px;overflow:hidden;font-size:20px;line-height:22px;color:#000"><span style="margin-left:59px">48:89C1</span></div>
<div style="left:454px;top:286px;width:520px;height:22px;overflow:hidden;font-size:20px;line-height:22px"><span style="color:#000">mov </span><span style="color:#008300">rcx</span><span style="color:#000">,</span><span style="color:#008300">rax</span></div>
<div style="left:87px;top:291px;width:10px;height:10px;border-radius:50%;background:#808080"></div>
<div style="left:112px;top:308px;width:127px;height:22px;overflow:hidden;font-size:20px;line-height:22px;color:#808080"><span style="margin-left:4px">0000000000401807</span></div>
<div style="left:245px;top:308px;width:200px;height:22px;overflow:hidden;font-size:20px;line-height:22px;color:#000"><span style="margin-left:59px">E8 B6150000</span></div>
<div style="left:454px;top:308px;width:520px;height:22px;overflow:hidden;font-size:20px;line-height:22px"><span style="color:#000;background:#00ffff">call</span><span style="color:#000"> </span><span style="color:#000;background:#ffff00">&lt;JMP.&amp;fgets&gt;</span></div>
<div style="left:87px;top:313px;width:10px;height:10px;border-radius:50%;background:#808080"></div>
<div style="left:112px;top:330px;width:127px;height:22px;overflow:hidden;font-size:20px;line-height:22px;color:#000"><span style="margin-left:4px">0000000000401808</span></div>
<div style="left:245px;top:330px;width:200px;height:22px;overflow:hidden;font-size:20px;line-height:22px;color:#000"><span style="margin-left:59px">48:8D45 A0</span></div>
<div style="left:454px;top:330px;width:520px;height:22px;overflow:hidden;font-size:20px;line-height:22px"><span style="color:#000">lea </span><span style="color:#008300">rax</span><span style="color:#000">,</span><span style="color:#000080">qword ptr </span><span style="color:#ff00ff">ss</span><span style="color:#000">:</span><span style="color:#000;background:#00ffff">[</span><span style="color:#b03434">rbp</span><span style="color:#f27711">-</span><span style="color:#828200">60</span><span style="color:#000;background:#00ffff">]</span></div>
<div style="left:87px;top:335px;width:10px;height:10px;border-radius:50%;background:#808080"></div>
<div style="left:112px;top:352px;width:127px;height:22px;overflow:hidden;font-size:20px;line-height:22px;color:#808080"><span style="margin-left:4px">0000000000401809</span></div>
<div style="left:245px;top:352px;width:200px;height:22px;overflow:hidden;font-size:20px;line-height:22px;color:#000"><span style="margin-left:59px">48:8D15 A6370000</span></div>
<div style="left:454px;top:352px;width:520px;height:22px;overflow:hidden;font-size:20px;line-height:22px"><span style="color:#000">lea </span><span style="color:#008300">rdx</span><span style="color:#000">,</span><span style="color:#000080">qword ptr </span><span style="color:#ff00ff">ds</span><span style="color:#000">:</span><span style="color:#000">[</span><span style="color:#000;background:#ffff00">4050DB</span><span style="color:#000">]</span></div>
<div style="left:87px;top:357px;width:10px;height:10px;border-radius:50%;background:#808080"></div>
<div style="left:112px;top:374px;width:127px;height:22px;overflow:hidden;font-size:20px;line-height:22px;color:#808080"><span style="margin-left:4px">000000000040180A</span></div>
<div style="left:245px;top:374px;width:200px;height:22px;overflow:hidden;font-size:20px;line-height:22px;color:#000"><span style="margin-left:59px">48:89C1</span></div>
<div style="left:454px;top:374px;width:520px;height:22px;overflow:hidden;font-size:20px;line-height:22px"><span style="color:#000">mov </span><span style="color:#008300">rcx</span><span style="color:#000">,</span><span style="color:#008300">rax</span></div>
<div style="left:87px;top:379px;width:10px;height:10px;border-radius:50%;background:#808080"></div>
<div style="left:112px;top:396px;width:127px;height:22px;overflow:hidden;font-size:20px;line-height:22px;color:#808080"><span style="margin-left:4px">000000000040180B</span></div>
<div style="left:245px;top:396px;width:200px;height:22px;overflow:hidden;font-size:20px;line-height:22px;color:#000"><span style="margin-left:59px">E8 4B150000</span></div>
<div style="left:454px;top:396px;width:520px;height:22px;overflow:hidden;font-size:20px;line-height:22px"><span style="color:#000;background:#00ffff">call</span><span style="color:#000"> </span><span style="color:#000;background:#ffff00">&lt;JMP.&amp;strcspn&gt;</span></div>
<div style="left:87px;top:401px;width:10px;height:10px;border-radius:50%;background:#808080"></div>
<div style="left:112px;top:418px;width:127px;height:22px;overflow:hidden;font-size:20px;line-height:22px;color:#808080"><span style="margin-left:4px">000000000040180C</span></div>
<div style="left:245px;top:418px;width:200px;height:22px;overflow:hidden;font-size:20px;line-height:22px;color:#000"><span style="margin-left:59px">C64405 A0 00</span></div>
<div style="left:454px;top:418px;width:520px;height:22px;overflow:hidden;font-size:20px;line-height:22px"><span style="color:#000">mov </span><span style="color:#000080">byte ptr </span><span style="color:#ff00ff">ss</span><span style="color:#000">:</span><span style="color:#000;background:#00ffff">[</span><span style="color:#b03434">rbp</span><span style="color:#f27711">+</span><span style="color:#3838bc">rax</span><span style="color:#f27711">-</span><span style="color:#828200">60</span><span style="color:#000;background:#00ffff">]</span><span style="color:#000">,</span><span style="color:#828200">0</span></div>
<div style="left:87px;top:423px;width:10px;height:10px;border-radius:50%;background:#808080"></div>
<div style="left:112px;top:440px;width:127px;height:22px;overflow:hidden;font-size:20px;line-height:22px;color:#808080"><span style="margin-left:4px">000000000040180D</span></div>
<div style="left:245px;top:440px;width:200px;height:22px;overflow:hidden;font-size:20px;line-height:22px;color:#000"><span style="margin-left:59px">48:8D55 A0</span></div>
<div style="left:454px;top:440px;width:520px;height:22px;overflow:hidden;font-size:20px;line-height:22px"><span style="color:#000">lea </span><span style="color:#008300">rdx</span><span style="color:#000">,</span><span style="color:#000080">qword ptr </span><span style="color:#ff00ff">ss</span><span style="color:#000">:</span><span style="color:#000;background:#00ffff">[</span><span style="color:#b03434">rbp</span><span style="color:#f27711">-</span><span style="color:#828200">60</span><span style="color:#000;background:#00ffff">]</span></div>
<div style="left:87px;top:445px;width:10px;height:10px;border-radius:50%;background:#808080"></div>
<div style="left:112px;top:462px;width:127px;height:22px;overflow:hidden;font-size:20px;line-height:22px;color:#808080"><span style="margin-left:4px">000000000040180E</span></div>
<div style="left:245px;top:462px;width:200px;height:22px;overflow:hidden;font-size:20px;line-height:22px;color:#000"><span style="margin-left:59px">48:8D85 A0000000</span></div>
<div style="left:454px;top:462px;width:520px;height:22px;overflow:hidden;font-size:20px;line-height:22px"><span style="color:#000">lea </span><span style="color:#008300">rax</span><span style="color:#000">,</span><span style="color:#000080">qword ptr </span><span style="color:#ff00ff">ss</span><span style="color:#000">:</span><span style="color:#000;background:#00ffff">[</span><span style="color:#b03434">rbp</span><span style="color:#f27711">+</span><span style="color:#828200">A0</span><span style="color:#000;background:#00ffff">]</span></div>
<div style="left:87px;top:467px;width:10px;height:10px;border-radius:50%;background:#808080"></div>
<div style="left:112px;top:484px;width:127px;height:22px;overflow:hidden;font-size:20px;line-height:22px;color:#808080"><span style="margin-left:4px">000000000040180F</span></div>
<div style="left:245px;top:484px;width:200px;height:22px;overflow:hidden;font-size:20px;line-height:22px;color:#000"><span style="margin-left:59px">48:89C1</span></div>
<div style="left:454px;top:484px;width:520px;height:22px;overflow:hidden;font-size:20px;line-height:22px"><span style="color:#000">mov </span><span style="color:#008300">rcx</span><span style="color:#000">,</span><span style="color:#008300">rax</span></div>
<div style="left:87px;top:489px;width:10px;height:10px;border-radius:50%;background:#808080"></div>
<div style="left:112px;top:506px;width:127px;height:22px;overflow:hidden;font-size:20px;line-height:22px;color:#808080"><span style="margin-left:4px">0000000000401810</span></div>
<div style="left:245px;top:506px;width:200px;height:22px;overflow:hidden;font-size:20px;line-height:22px;color:#000"><span style="margin-left:59px">E8 5DFEFFFF</span></div>
<div style="left:454px;top:506px;width:520px;height:22px;overflow:hidden;font-size:20px;line-height:22px"><span style="color:#000;background:#00ffff">call</span><span style="color:#000"> </span><span style="color:#000;background:#ffff00">梦之衣.4017B2</span></div>
<div style="left:87px;top:511px;width:10px;height:10px;border-radius:50%;background:#808080"></div>
<div style="left:112px;top:528px;width:127px;height:22px;overflow:hidden;font-size:20px;line-height:22px;color:#808080"><span style="margin-left:4px">0000000000401811</span></div>
<div style="left:245px;top:528px;width:200px;height:22px;overflow:hidden;font-size:20px;line-height:22px;color:#000"><span style="margin-left:59px">85C0</span></div>
<div style="left:454px;top:528px;width:520px;height:22px;overflow:hidden;font-size:20px;line-height:22px"><span style="color:#000">test </span><span style="color:#008300">eax</span><span style="color:#000">,</span><span style="color:#008300">eax</span></div>
<div style="left:87px;top:533px;width:10px;height:10px;border-radius:50%;background:#808080"></div>
<div style="left:112px;top:550px;width:127px;height:22px;overflow:hidden;font-size:20px;line-height:22px;color:#808080"><span style="margin-left:4px">0000000000401812</span></div>
<div style="left:245px;top:550px;width:200px;height:22px;overflow:hidden;font-size:20px;line-height:22px;color:#000"><span style="margin-left:59px">74 1A</span></div>
<div style="left:454px;top:550px;width:520px;height:22px;overflow:hidden;font-size:20px;line-height:22px"><span style="color:#ff0000;background:#ffff00">je</span><span style="color:#000"> </span><span style="color:#000;background:#ffff00">梦之衣.401973</span></div>
<div style="left:87px;top:555px;width:10px;height:10px;border-radius:50%;background:#808080"></div>
<div style="left:112px;top:572px;width:127px;height:22px;overflow:hidden;font-size:20px;line-height:22px;color:#808080"><span style="margin-left:4px">0000000000401813</span></div>
<div style="left:245px;top:572px;width:200px;height:22px;overflow:hidden;font-size:20px;line-height:22px;color:#000"><span style="margin-left:59px">48:8D0D 7D370000</span></div>
<div style="left:454px;top:572px;width:520px;height:22px;overflow:hidden;font-size:20px;line-height:22px"><span style="color:#000">lea </span><span style="color:#008300">rcx</span><span style="color:#000">,</span><span style="color:#000080">qword ptr </span><span style="color:#ff00ff">ds</span><span style="color:#000">:</span><span style="color:#000">[</span><span style="color:#000;background:#ffff00">4050DD</span><span style="color:#000">]</span></div>
<div style="left:984px;top:572px;width:476px;height:22px;overflow:hidden;font-size:20px;line-height:22px;color:#aa5500">00000000004050DD:"你成功找回了‘梦之衣’！"</div>
<div style="left:87px;top:577px;width:10px;height:10px;border-radius:50%;background:#808080"></div>
<div style="left:112px;top:594px;width:127px;height:22px;overflow:hidden;font-size:20px;line-height:22px;color:#808080"><span style="margin-left:4px">0000000000401814</span></div>
<div style="left:245px;top:594px;width:200px;height:22px;overflow:hidden;font-size:20px;line-height:22px;color:#000"><span style="margin-left:59px">E8 43150000</span></div>
<div style="left:454px;top:594px;width:520px;height:22px;overflow:hidden;font-size:20px;line-height:22px"><span style="color:#000;background:#00ffff">call</span><span style="color:#000"> </span><span style="color:#000;background:#ffff00">&lt;JMP.&amp;puts&gt;</span></div>
<div style="left:87px;top:599px;width:10px;height:10px;border-radius:50%;background:#808080"></div>
<div style="left:112px;top:616px;width:127px;height:22px;overflow:hidden;font-size:20px;line-height:22px;color:#808080"><span style="margin-left:4px">0000000000401815</span></div>
<div style="left:245px;top:616px;width:200px;height:22px;overflow:hidden;font-size:20px;line-height:22px;color:#000"><span style="margin-left:59px">48:8D0D 8C370000</span></div>
<div style="left:454px;top:616px;width:520px;height:22px;overflow:hidden;font-size:20px;line-height:22px"><span style="color:#000">lea </span><span style="color:#008300">rcx</span><span style="color:#000">,</span><span style="color:#000080">qword ptr </span><span style="color:#ff00ff">ds</span><span style="color:#000">:</span><span style="color:#000">[</span><span style="color:#000;background:#ffff00">4050F8</span><span style="color:#000">]</span></div>
<div style="left:984px;top:616px;width:476px;height:22px;overflow:hidden;font-size:20px;line-height:22px;color:#aa5500">00000000004050F8:"事件触发成功！你将获得无与伦比的力量"</div>
<div style="left:87px;top:621px;width:10px;height:10px;border-radius:50%;background:#808080"></div>
<div style="left:112px;top:638px;width:127px;height:22px;overflow:hidden;font-size:20px;line-height:22px;color:#808080"><span style="margin-left:4px">0000000000401816</span></div>
<div style="left:245px;top:638px;width:200px;height:22px;overflow:hidden;font-size:20px;line-height:22px;color:#000"><span style="margin-left:59px">E8 37150000</span></div>
<div style="left:454px;top:638px;width:520px;height:22px;overflow:hidden;font-size:20px;line-height:22px"><span style="color:#000;background:#00ffff">call</span><span style="color:#000"> </span><span style="color:#000;background:#ffff00">&lt;JMP.&amp;puts&gt;</span></div>
<div style="left:87px;top:643px;width:10px;height:10px;border-radius:50%;background:#808080"></div>
<div style="left:112px;top:660px;width:127px;height:22px;overflow:hidden;font-size:20px;line-height:22px;color:#808080"><span style="margin-left:4px">0000000000401817</span></div>
<div style="left:245px;top:660px;width:200px;height:22px;overflow:hidden;font-size:20px;line-height:22px;color:#000"><span style="margin-left:59px">EB 18</span></div>
<div style="left:454px;top:660px;width:520px;height:22px;overflow:hidden;font-size:20px;line-height:22px"><span style="color:#000;background:#ffff00">jmp</span><span style="color:#000"> </span><span style="color:#000;background:#ffff00">梦之衣.40198B</span></div>
<div style="left:87px;top:665px;width:10px;height:10px;border-radius:50%;background:#808080"></div>
<div style="left:112px;top:682px;width:127px;height:22px;overflow:hidden;font-size:20px;line-height:22px;color:#808080"><span style="margin-left:4px">0000000000401818</span></div>
<div style="left:245px;top:682px;width:200px;height:22px;overflow:hidden;font-size:20px;line-height:22px;color:#000"><span style="margin-left:59px">48:8D0D AE370000</span></div>
<div style="left:454px;top:682px;width:520px;height:22px;overflow:hidden;font-size:20px;line-height:22px"><span style="color:#000">lea </span><span style="color:#008300">rcx</span><span style="color:#000">,</span><span style="color:#000080">qword ptr </span><span style="color:#ff00ff">ds</span><span style="color:#000">:</span><span style="color:#000">[</span><span style="color:#000;background:#ffff00">405128</span><span style="color:#000">]</span></div>
<div style="left:984px;top:682px;width:476px;height:22px;overflow:hidden;font-size:20px;line-height:22px;color:#aa5500">0000000000405128:"密码错误，‘梦之衣’仍然遥不可及"</div>
<div style="left:87px;top:687px;width:10px;height:10px;border-radius:50%;background:#808080"></div>
<div style="left:112px;top:704px;width:127px;height:22px;overflow:hidden;font-size:20px;line-height:22px;color:#808080"><span style="margin-left:4px">0000000000401819</span></div>
<div style="left:245px;top:704px;width:200px;height:22px;overflow:hidden;font-size:20px;line-height:22px;color:#000"><span style="margin-left:59px">E8 29150000</span></div>
<div style="left:454px;top:704px;width:520px;height:22px;overflow:hidden;font-size:20px;line-height:22px"><span style="color:#000;background:#00ffff">call</span><span style="color:#000"> </span><span style="color:#000;background:#ffff00">&lt;JMP.&amp;puts&gt;</span></div>
<div style="left:87px;top:709px;width:10px;height:10px;border-radius:50%;background:#808080"></div>
<div style="left:112px;top:726px;width:127px;height:22px;overflow:hidden;font-size:20px;line-height:22px;color:#808080"><span style="margin-left:4px">000000000040181A</span></div>
<div style="left:245px;top:726px;width:200px;height:22px;overflow:hidden;font-size:20px;line-height:22px;color:#000"><span style="margin-left:59px">48:8D0D CA370000</span></div>
<div style="left:454px;top:726px;width:520px;height:22px;overflow:hidden;font-size:20px;line-height:22px"><span style="color:#000">lea </span><span style="color:#008300">rcx</span><span style="color:#000">,</span><span style="color:#000080">qword ptr </span><span style="color:#ff00ff">ds</span><span style="color:#000">:</span><span style="color:#000">[</span><span style="color:#000;background:#ffff00">405150</span><span style="color:#000">]</span></div>
<div style="left:984px;top:726px;width:476px;height:22px;overflow:hidden;font-size:20px;line-height:22px;color:#aa5500">0000000000405150:"你需要更加坚定与勇敢，才能找回"</div>
<div style="left:87px;top:731px;width:10px;height:10px;border-radius:50%;background:#808080"></div>
<div style="left:112px;top:748px;width:127px;height:22px;overflow:hidden;font-size:20px;line-height:22px;color:#808080"><span style="margin-left:4px">000000000040181B</span></div>
<div style="left:245px;top:748px;width:200px;height:22px;overflow:hidden;font-size:20px;line-height:22px;color:#000"><span style="margin-left:59px">E8 1D150000</span></div>
<div style="left:454px;top:748px;width:520px;height:22px;overflow:hidden;font-size:20px;line-height:22px"><span style="color:#000;background:#00ffff">call</span><span style="color:#000"> </span><span style="color:#000;background:#ffff00">&lt;JMP.&amp;puts&gt;</span></div>
<div style="left:87px;top:753px;width:10px;height:10px;border-radius:50%;background:#808080"></div>
<div style="left:112px;top:770px;width:127px;height:22px;overflow:hidden;font-size:20px;line-height:22px;color:#808080"><span style="margin-left:4px">000000000040181C</span></div>
<div style="left:245px;top:770px;width:200px;height:22px;overflow:hidden;font-size:20px;line-height:22px;color:#000"><span style="margin-left:59px">48:8D85 A0000000</span></div>
<div style="left:454px;top:770px;width:520px;height:22px;overflow:hidden;font-size:20px;line-height:22px"><span style="color:#000">lea </span><span style="color:#008300">rax</span><span style="color:#000">,</span><span style="color:#000080">qword ptr </span><span style="color:#ff00ff">ss</span><span style="color:#000">:</span><span style="color:#000;background:#00ffff">[</span><span style="color:#b03434">rbp</span><span style="color:#f27711">+</span><span style="color:#828200">A0</span><span style="color:#000;background:#00ffff">]</span></div>
<div style="left:87px;top:775px;width:10px;height:10px;border-radius:50%;background:#808080"></div>
<div style="left:112px;top:792px;width:127px;height:22px;overflow:hidden;font-size:20px;line-height:22px;color:#808080"><span style="margin-left:4px">000000000040181D</span></div>
<div style="left:245px;top:792px;width:200px;height:22px;overflow:hidden;font-size:20px;line-height:22px;color:#000"><span style="margin-left:59px">48:89C1</span></div>
<div style="left:454px;top:792px;width:520px;height:22px;overflow:hidden;font-size:20px;line-height:22px"><span style="color:#000">mov </span><span style="color:#008300">rcx</span><span style="color:#000">,</span><span style="color:#008300">rax</span></div>
<div style="left:87px;top:797px;width:10px;height:10px;border-radius:50%;background:#808080"></div>
<div style="left:112px;top:814px;width:127px;height:22px;overflow:hidden;font-size:20px;line-height:22px;color:#808080"><span style="margin-left:4px">000000000040181E</span></div>
<div style="left:245px;top:814px;width:200px;height:22px;overflow:hidden;font-size:20px;line-height:22px;color:#000"><span style="margin-left:59px">E8 82FEFFFF</span></div>
<div style="left:454px;top:814px;width:520px;height:22px;overflow:hidden;font-size:20px;line-height:22px"><span style="color:#000;background:#00ffff">call</span><span style="color:#000"> </span><span style="color:#000;background:#ffff00">梦之衣.40181C</span></div>
<div style="left:87px;top:819px;width:10px;height:10px;border-radius:50%;background:#808080"></div>
<div style="left:112px;top:836px;width:127px;height:22px;overflow:hidden;font-size:20px;line-height:22px;color:#808080"><span style="margin-left:4px">000000000040181F</span></div>
<div style="left:245px;top:836px;width:200px;height:22px;overflow:hidden;font-size:20px;line-height:22px;color:#000"><span style="margin-left:59px">B8 00000000</span></div>
<div style="left:454px;top:836px;width:520px;height:22px;overflow:hidden;font-size:20px;line-height:22px"><span style="color:#000">mov </span><span style="color:#008300">eax</span><span style="color:#000">,</span><span style="color:#828200">0</span></div>
<div style="left:87px;top:841px;width:10px;height:10px;border-radius:50%;background:#808080"></div>
<div style="left:112px;top:858px;width:127px;height:22px;overflow:hidden;font-size:20px;line-height:22px;color:#808080"><span style="margin-left:4px">0000000000401820</span></div>
<div style="left:245px;top:858px;width:200px;height:22px;overflow:hidden;font-size:20px;line-height:22px;color:#000"><span style="margin-left:59px">48:81C4 30010000</span></div>
<div style="left:454px;top:858px;width:520px;height:22px;overflow:hidden;font-size:20px;line-height:22px"><span style="color:#000">add </span><span style="color:#008300">rsp</span><span style="color:#000">,</span><span style="color:#828200">130</span></div>
<div style="left:87px;top:863px;width:10px;height:10px;border-radius:50%;background:#808080"></div>
<div style="left:112px;top:880px;width:127px;height:22px;overflow:hidden;font-size:20px;line-height:22px;color:#808080"><span style="margin-left:4px">0000000000401821</span></div>
<div style="left:245px;top:880px;width:200px;height:22px;overflow:hidden;font-size:20px;line-height:22px;color:#000"><span style="margin-left:59px">5D</span></div>
<div style="left:454px;top:880px;width:520px;height:22px;overflow:hidden;font-size:20px;line-height:22px"><span style="color:#0000ff">pop</span><span style="color:#000"> </span><span style="color:#008300">rbp</span></div>
<div style="left:87px;top:885px;width:10px;height:10px;border-radius:50%;background:#808080"></div>
<div style="left:239px;top:154px;width:2px;height:748px;background:#7a7a7a;"></div>
<div style="left:443px;top:154px;width:2px;height:748px;background:#7a7a7a;"></div>
<div style="left:974px;top:154px;width:2px;height:748px;background:#7a7a7a;"></div>
<svg style="left:270px;top:556px;" width="16" height="10" viewBox="0 0 16 10"><path d="M3.8 2 L8.3 6.3 L12.8 2" stroke="#f00" stroke-width="2.3" fill="none"/></svg>
<svg style="left:270px;top:666px;" width="16" height="10" viewBox="0 0 16 10"><path d="M3.8 2 L8.3 6.3 L12.8 2" stroke="#f00" stroke-width="2.3" fill="none"/></svg>
<svg style="left:0px;top:152px;" width="107" height="777" viewBox="0 0 107 777">
<path d="M83 408 H10 V540 H82" stroke="#00b4ff" stroke-width="2" fill="none" stroke-dasharray="10 2.5"/>
<path d="M76 533 L83 540 L76 547" stroke="#00b4ff" stroke-width="2" fill="none"/>
<path d="M83 518 H32 V628 H82" stroke="#00b4ff" stroke-width="2" fill="none"/>
<path d="M76 621 L83 628 L76 635" stroke="#00b4ff" stroke-width="2" fill="none"/>
</svg>
<div style="left:1460px;top:154px;width:26px;height:748px;background:#f0f0f0;"></div>
<div style="left:1468px;top:202px;width:11px;height:26px;background:#858585;"></div>
<div style="left:112px;top:902px;width:1374px;height:26px;background:#f0f0f0;"></div>
<div style="left:138px;top:910px;width:522px;height:11px;background:#858585;"></div>
<div style="left:10px;top:935px;font-size:20px;line-height:22px;color:#000;font-family:'Liberation Mono',monospace;">rax=0</div>
<div style="left:10px;top:957px;font-size:20px;line-height:22px;color:#000;font-family:'Liberation Mono',monospace;">qword ptr ss:[rbp-60]=[000000000061FB38]=msvcrt.00007FFED0E81755</div>
<div style="left:10px;top:1001px;font-size:20px;line-height:22px;color:#000;font-family:'Liberation Mono',monospace;">NEX0:000000000040192A 梦之衣.exe:$192A #0</div>
<div style="left:1491px;top:153px;width:1066px;height:32px;background:#fdfdfd;box-sizing:border-box;border:1px solid #dcdcdc;border-radius:4px;border-right:none"></div>
<div style="left:1994px;top:157px;font-size:17px;line-height:24px;color:#000;font-family:'Liberation Mono',monospace;"><span style="font-size:17px">隐</span><span style="font-size:17px">藏</span><span style="font-family:Liberation Sans;font-size:17px">FPU</span></div>
<div style="left:1490px;top:186px;width:1045px;height:329px;background:#fff8f0;box-sizing:border-box;border-left:1px solid #868c96;border-top:1px solid #868c96"></div>
<div style="left:1490px;top:186px;width:1067px;height:1px;background:#868c96;"></div>
<div style="left:2535px;top:187px;width:22px;height:328px;background:#f0f0f0;"></div>
<div style="left:2542px;top:212px;width:11px;height:51px;background:#858585;"></div>
<div style="left:1491px;top:514px;width:1066px;height:26px;background:#f0f0f0;"></div>
<div style="left:1516px;top:522px;width:516px;height:11px;background:#858585;"></div>
<div style="left:1561px;top:196px;width:155px;height:16px;background:#e9e9e9;"></div>
<div style="left:1502px;top:208px;width:30px;height:4px;background:#aa0000;"></div>
<div style="left:1502px;top:272px;width:30px;height:4px;background:#008000;"></div>
<div style="left:1502px;top:197px;font-size:16px;line-height:16px;color:#000;font-family:'Liberation Mono',monospace;">RAX</div>
<div style="left:1562px;top:197px;font-size:16px;line-height:16px;color:#ff0000;font-family:'Liberation Mono',monospace;">0000000000000000</div>
<div style="left:1502px;top:213px;font-size:16px;line-height:16px;color:#000;font-family:'Liberation Mono',monospace;">RBX</div>
<div style="left:1562px;top:213px;font-size:16px;line-height:16px;color:#ff0000;font-family:'Liberation Mono',monospace;">000000000061FB70</div>
<div style="left:1502px;top:229px;font-size:16px;line-height:16px;color:#008000;font-family:'Liberation Mono',monospace;">RCX</div>
<div style="left:1562px;top:229px;font-size:16px;line-height:16px;color:#ff0000;font-family:'Liberation Mono',monospace;">00007FFED1E30D14</div>
<div style="left:1766px;top:229px;font-size:16px;line-height:16px;color:#000;font-family:'Liberation Mono',monospace;">ntdll.00007FFED1E30D14</div>
<div style="left:1502px;top:245px;font-size:16px;line-height:16px;color:#008000;font-family:'Liberation Mono',monospace;">RDX</div>
<div style="left:1562px;top:245px;font-size:16px;line-height:16px;color:#ff0000;font-family:'Liberation Mono',monospace;">0000000000000000</div>
<div style="left:1502px;top:261px;font-size:16px;line-height:16px;color:#000;font-family:'Liberation Mono',monospace;">RBP</div>
<div style="left:1562px;top:261px;font-size:16px;line-height:16px;color:#ff0000;font-family:'Liberation Mono',monospace;">000000000061FB98</div>
<div style="left:1502px;top:277px;font-size:16px;line-height:16px;color:#000;font-family:'Liberation Mono',monospace;">RSP</div>
<div style="left:1562px;top:277px;font-size:16px;line-height:16px;color:#ff0000;font-family:'Liberation Mono',monospace;">000000000061FAC8</div>
<div style="left:1502px;top:293px;font-size:16px;line-height:16px;color:#000;font-family:'Liberation Mono',monospace;">RSI</div>
<div style="left:1562px;top:293px;font-size:16px;line-height:16px;color:#ff0000;font-family:'Liberation Mono',monospace;">0000000000000064</div>
<div style="left:1766px;top:293px;font-size:16px;line-height:16px;color:#000;font-family:'Liberation Mono',monospace;">'d'</div>
<div style="left:1502px;top:309px;font-size:16px;line-height:16px;color:#000;font-family:'Liberation Mono',monospace;">RDI</div>
<div style="left:1562px;top:309px;font-size:16px;line-height:16px;color:#000;font-family:'Liberation Mono',monospace;">0000000000000000</div>
<div style="left:1502px;top:341px;font-size:16px;line-height:16px;color:#008000;font-family:'Liberation Mono',monospace;">R8</div>
<div style="left:1562px;top:341px;font-size:16px;line-height:16px;color:#ff0000;font-family:'Liberation Mono',monospace;">000000000061FAC8</div>
<div style="left:1502px;top:357px;font-size:16px;line-height:16px;color:#008000;font-family:'Liberation Mono',monospace;">R9</div>
<div style="left:1562px;top:357px;font-size:16px;line-height:16px;color:#000;font-family:'Liberation Mono',monospace;">0000000000000000</div>
<div style="left:1502px;top:373px;font-size:16px;line-height:16px;color:#000;font-family:'Liberation Mono',monospace;">R10</div>
<div style="left:1562px;top:373px;font-size:16px;line-height:16px;color:#ff0000;font-family:'Liberation Mono',monospace;">0000000000000000</div>
<div style="left:1502px;top:389px;font-size:16px;line-height:16px;color:#000;font-family:'Liberation Mono',monospace;">R11</div>
<div style="left:1562px;top:389px;font-size:16px;line-height:16px;color:#ff0000;font-family:'Liberation Mono',monospace;">0000000000000246</div>
<div style="left:1766px;top:389px;font-size:16px;line-height:16px;color:#000;font-family:'Liberation Mono',monospace;">L'Ɇ'</div>
<div style="left:1502px;top:405px;font-size:16px;line-height:16px;color:#000;font-family:'Liberation Mono',monospace;">R12</div>
<div style="left:1562px;top:405px;font-size:16px;line-height:16px;color:#000;font-family:'Liberation Mono',monospace;">0000000000000000</div>
<div style="left:1502px;top:421px;font-size:16px;line-height:16px;color:#000;font-family:'Liberation Mono',monospace;">R13</div>
<div style="left:1562px;top:421px;font-size:16px;line-height:16px;color:#ff0000;font-family:'Liberation Mono',monospace;">0000000000000001</div>
<div style="left:1502px;top:437px;font-size:16px;line-height:16px;color:#000;font-family:'Liberation Mono',monospace;">R14</div>
<div style="left:1562px;top:437px;font-size:16px;line-height:16px;color:#ff0000;font-family:'Liberation Mono',monospace;">00007FFED0EFE9E0</div>
<div style="left:1766px;top:437px;font-size:16px;line-height:16px;color:#000;font-family:'Liberation Mono',monospace;">"11111\r\n"</div>
<div style="left:1502px;top:453px;font-size:16px;line-height:16px;color:#000;font-family:'Liberation Mono',monospace;">R15</div>
<div style="left:1562px;top:453px;font-size:16px;line-height:16px;color:#ff0000;font-family:'Liberation Mono',monospace;">00007FFED0EFE9E0</div>
<div style="left:1766px;top:453px;font-size:16px;line-height:16px;color:#000;font-family:'Liberation Mono',monospace;">"11111\r\n"</div>
<div style="left:1502px;top:485px;font-size:16px;line-height:16px;color:#000;font-family:'Liberation Mono',monospace;">RIP</div>
<div style="left:1562px;top:485px;font-size:16px;line-height:16px;color:#ff0000;font-family:'Liberation Mono',monospace;">00007FFED1E30D14</div>
<div style="left:1766px;top:485px;font-size:16px;line-height:16px;color:#000;font-family:'Liberation Mono',monospace;">ntdll.00007FFED1E30D14</div>
<div style="left:1490px;top:542px;width:857px;height:36px;background:#fdfdfd;border-radius:4px;box-sizing:border-box;border:1px solid #e4e4e4"></div>
<div style="left:1499px;top:548px;font-size:18px;line-height:26px;color:#000;font-family:'Liberation Mono',monospace;"><span style="font-size:18px">默</span><span style="font-size:18px">认</span><span style="display:inline-block;width:9px;text-align:center;font-family:'Liberation Serif',serif;font-size:17px">&nbsp;</span><span style="display:inline-block;width:9px;text-align:center;font-family:'Liberation Serif',serif;font-size:17px">(</span><span style="display:inline-block;width:9px;text-align:center;font-family:'Liberation Serif',serif;font-size:17px">x</span><span style="display:inline-block;width:9px;text-align:center;font-family:'Liberation Serif',serif;font-size:17px">6</span><span style="display:inline-block;width:9px;text-align:center;font-family:'Liberation Serif',serif;font-size:17px">4</span><span style="display:inline-block;width:9px;text-align:center;font-family:'Liberation Serif',serif;font-size:17px">&nbsp;</span><span style="display:inline-block;width:9px;text-align:center;font-family:'Liberation Serif',serif;font-size:17px">f</span><span style="display:inline-block;width:9px;text-align:center;font-family:'Liberation Serif',serif;font-size:17px">a</span><span style="display:inline-block;width:9px;text-align:center;font-family:'Liberation Serif',serif;font-size:17px">s</span><span style="display:inline-block;width:9px;text-align:center;font-family:'Liberation Serif',serif;font-size:17px">t</span><span style="display:inline-block;width:9px;text-align:center;font-family:'Liberation Serif',serif;font-size:17px">c</span><span style="display:inline-block;width:9px;text-align:center;font-family:'Liberation Serif',serif;font-size:17px">a</span><span style="display:inline-block;width:9px;text-align:center;font-family:'Liberation Serif',serif;font-size:17px">l</span><span style="display:inline-block;width:9px;text-align:center;font-family:'Liberation Serif',serif;font-size:17px">l</span><span style="display:inline-block;width:9px;text-align:center;font-family:'Liberation Serif',serif;font-size:17px">)</span></div>
<svg style="left:2324px;top:554px;" width="12" height="10" viewBox="0 0 12 10"><path d="M2 4 H10 L6 8 Z" fill="#222"/></svg>
<div style="left:2355px;top:544px;width:65px;height:34px;background:#fdfdfd;box-sizing:border-box;border-bottom:1px solid #888"></div>
<div style="left:2360px;top:549px;font-size:18px;line-height:24px;color:#000;font-family:'Liberation Serif',serif;">5</div>
<div style="left:2389px;top:545px;width:30px;height:16px;background:#e8e8e8;box-sizing:border-box;border:1px solid #c8c8c8"></div>
<div style="left:2389px;top:561px;width:30px;height:15px;background:#e8e8e8;box-sizing:border-box;border:1px solid #c8c8c8"></div>
<svg style="left:2389px;top:545px;" width="30" height="31" viewBox="0 0 30 31"><path d="M10 11 L15 6 L20 11 Z M10 20 L15 25 L20 20 Z" fill="#111"/></svg>
<div style="left:2428px;top:550px;width:20px;height:20px;background:#fff;box-sizing:border-box;border:1px solid #555;border-radius:4px"></div>
<div style="left:2454px;top:547px;font-size:18px;line-height:26px;color:#000;font-family:'Liberation Mono',monospace;"><span style="font-size:18px">解</span><span style="font-size:18px">锁</span></div>
<div style="left:1490px;top:580px;width:1067px;height:453px;background:#fff8f0;box-sizing:border-box;border-left:1px solid #868c96;border-top:1px solid #868c96;border-bottom:1px solid #868c96"></div>
<div style="left:2533px;top:581px;width:24px;height:451px;background:#f0f0f0;"></div>
<svg style="left:2533px;top:581px;" width="24" height="451" viewBox="0 0 24 451"><path d="M7 18 L12.5 12 L18 18 Z" fill="#a0a0a0"/><path d="M7 435 L12.5 443 L18 435 Z" fill="#a0a0a0"/></svg>
<div style="left:1492px;top:582px;width:1040px;height:22px;background:#c0c0c0;"></div>
<div style="left:1500px;top:583px;font-size:20px;line-height:22px;color:#000;font-family:'Liberation Mono',monospace;">1: rcx 00007FFED1E30D14 ntdll.00007FFED1E30D14</div>
<div style="left:1500px;top:605px;font-size:20px;line-height:22px;color:#000;font-family:'Liberation Mono',monospace;">2: rdx 0000000000000000</div>
<div style="left:1500px;top:627px;font-size:20px;line-height:22px;color:#000;font-family:'Liberation Mono',monospace;">3: r8 000000000061FAC8</div>
<div style="left:1500px;top:649px;font-size:20px;line-height:22px;color:#000;font-family:'Liberation Mono',monospace;">4: r9 0000000000000000</div>
<div style="left:1500px;top:671px;font-size:20px;line-height:22px;color:#000;font-family:'Liberation Mono',monospace;">5: [rsp+28] 000000000061FB20</div>
<div style="left:1551px;top:1038px;width:981px;height:18px;background:#c0c0c0;"></div>
<div style="left:2533px;top:1037px;width:24px;height:203px;background:#f0f0f0;"></div>
<div style="left:1724px;top:1038px;width:2px;height:202px;background:#7a7a7a;"></div>
<div style="left:1905px;top:1038px;width:2px;height:202px;background:#7a7a7a;"></div>
<div style="left:1730px;top:1040px;width:4px;height:200px;background:#0000ff;"></div>
<div style="left:1730px;top:1040px;width:10px;height:4px;background:#0000ff;"></div>
<div style="left:1560px;top:1038px;font-size:16px;line-height:18px;color:#000;font-family:'Liberation Mono',monospace;">000000000061FB38</div>
<div style="left:1742px;top:1038px;font-size:16px;line-height:18px;color:#000;font-family:'Liberation Mono',monospace;">00007FFED0E81755</div>
<div style="left:1560px;top:1056px;font-size:16px;line-height:18px;color:#808080;font-family:'Liberation Mono',monospace;">000000000061FB40</div>
<div style="left:1742px;top:1056px;font-size:16px;line-height:18px;color:#000;font-family:'Liberation Mono',monospace;">0000000000001000</div>
<div style="left:1560px;top:1074px;font-size:16px;line-height:18px;color:#808080;font-family:'Liberation Mono',monospace;">000000000061FB48</div>
<div style="left:1742px;top:1074px;font-size:16px;line-height:18px;color:#000;font-family:'Liberation Mono',monospace;">0000000000000000</div>
<div style="left:1560px;top:1092px;font-size:16px;line-height:18px;color:#808080;font-family:'Liberation Mono',monospace;">000000000061FB50</div>
<div style="left:1742px;top:1092px;font-size:16px;line-height:18px;color:#000;font-family:'Liberation Mono',monospace;">0000E462CCEECD6B</div>
<div style="left:1560px;top:1110px;font-size:16px;line-height:18px;color:#808080;font-family:'Liberation Mono',monospace;">000000000061FB58</div>
<div style="left:1742px;top:1110px;font-size:16px;line-height:18px;color:#000;font-family:'Liberation Mono',monospace;">000000000061FB70</div>
<div style="left:1560px;top:1128px;font-size:16px;line-height:18px;color:#808080;font-family:'Liberation Mono',monospace;">000000000061FB60</div>
<div style="left:1742px;top:1128px;font-size:16px;line-height:18px;color:#000;font-family:'Liberation Mono',monospace;">0000000000000000</div>
<div style="left:1560px;top:1146px;font-size:16px;line-height:18px;color:#808080;font-family:'Liberation Mono',monospace;">000000000061FB68</div>
<div style="left:1742px;top:1146px;font-size:16px;line-height:18px;color:#000;font-family:'Liberation Mono',monospace;">0000000000000038</div>
<div style="left:1560px;top:1164px;font-size:16px;line-height:18px;color:#808080;font-family:'Liberation Mono',monospace;">000000000061FB70</div>
<div style="left:1742px;top:1164px;font-size:16px;line-height:18px;color:#000;font-family:'Liberation Mono',monospace;">FFFFFFFE00000000</div>
<div style="left:1560px;top:1182px;font-size:16px;line-height:18px;color:#808080;font-family:'Liberation Mono',monospace;">000000000061FB78</div>
<div style="left:1742px;top:1182px;font-size:16px;line-height:18px;color:#000;font-family:'Liberation Mono',monospace;">0001000000000000</div>
<div style="left:1560px;top:1200px;font-size:16px;line-height:18px;color:#808080;font-family:'Liberation Mono',monospace;">000000000061FB80</div>
<div style="left:1742px;top:1200px;font-size:16px;line-height:18px;color:#000;font-family:'Liberation Mono',monospace;">00000000000001F7</div>
<div style="left:1560px;top:1218px;font-size:16px;line-height:18px;color:#808080;font-family:'Liberation Mono',monospace;">000000000061FB88</div>
<div style="left:1742px;top:1218px;font-size:16px;line-height:18px;color:#000;font-family:'Liberation Mono',monospace;">000000000061FCF8</div>
<div style="left:1560px;top:1236px;font-size:16px;line-height:18px;color:#808080;font-family:'Liberation Mono',monospace;">000000000061FB90</div>
<div style="left:1742px;top:1236px;font-size:16px;line-height:18px;color:#000;font-family:'Liberation Mono',monospace;">0000E462CCEEC23F</div>
<div style="left:1916px;top:1038px;font-size:16px;line-height:18px;color:#ff0000;font-family:'Liberation Mono',monospace;"><span style="font-size:16px">返</span><span style="font-size:16px">回</span><span style="font-size:16px">到</span><span style="display:inline-block;width:9.6px;text-align:center;font-family:'Liberation Mono',monospace;font-size:16px">&nbsp;</span><span style="display:inline-block;width:9.6px;text-align:center;font-family:'Liberation Mono',monospace;font-size:16px">m</span><span style="display:inline-block;width:9.6px;text-align:center;font-family:'Liberation Mono',monospace;font-size:16px">s</span><span style="display:inline-block;width:9.6px;text-align:center;font-family:'Liberation Mono',monospace;font-size:16px">v</span><span style="display:inline-block;width:9.6px;text-align:center;font-family:'Liberation Mono',monospace;font-size:16px">c</span><span style="display:inline-block;width:9.6px;text-align:center;font-family:'Liberation Mono',monospace;font-size:16px">r</span><span style="display:inline-block;width:9.6px;text-align:center;font-family:'Liberation Mono',monospace;font-size:16px">t</span><span style="display:inline-block;width:9.6px;text-align:center;font-family:'Liberation Mono',monospace;font-size:16px">.</span><span style="display:inline-block;width:9.6px;text-align:center;font-family:'Liberation Mono',monospace;font-size:16px">0</span><span style="display:inline-block;width:9.6px;text-align:center;font-family:'Liberation Mono',monospace;font-size:16px">0</span><span style="display:inline-block;width:9.6px;text-align:center;font-family:'Liberation Mono',monospace;font-size:16px">0</span><span style="display:inline-block;width:9.6px;text-align:center;font-family:'Liberation Mono',monospace;font-size:16px">0</span><span style="display:inline-block;width:9.6px;text-align:center;font-family:'Liberation Mono',monospace;font-size:16px">7</span><span style="display:inline-block;width:9.6px;text-align:center;font-family:'Liberation Mono',monospace;font-size:16px">F</span><span style="display:inline-block;width:9.6px;text-align:center;font-family:'Liberation Mono',monospace;font-size:16px">F</span><span style="display:inline-block;width:9.6px;text-align:center;font-family:'Liberation Mono',monospace;font-size:16px">E</span><span style="display:inline-block;width:9.6px;text-align:center;font-family:'Liberation Mono',monospace;font-size:16px">D</span><span style="display:inline-block;width:9.6px;text-align:center;font-family:'Liberation Mono',monospace;font-size:16px">0</span><span style="display:inline-block;width:9.6px;text-align:center;font-family:'Liberation Mono',monospace;font-size:16px">E</span><span style="display:inline-block;width:9.6px;text-align:center;font-family:'Liberation Mono',monospace;font-size:16px">8</span><span style="display:inline-block;width:9.6px;text-align:center;font-family:'Liberation Mono',monospace;font-size:16px">1</span><span style="display:inline-block;width:9.6px;text-align:center;font-family:'Liberation Mono',monospace;font-size:16px">7</span><span style="display:inline-block;width:9.6px;text-align:center;font-family:'Liberation Mono',monospace;font-size:16px">5</span><span style="display:inline-block;width:9.6px;text-align:center;font-family:'Liberation Mono',monospace;font-size:16px">5</span><span style="display:inline-block;width:9.6px;text-align:center;font-family:'Liberation Mono',monospace;font-size:16px">&nbsp;</span><span style="font-size:16px">自</span><span style="display:inline-block;width:9.6px;text-align:center;font-family:'Liberation Mono',monospace;font-size:16px">&nbsp;</span><span style="display:inline-block;width:9.6px;text-align:center;font-family:'Liberation Mono',monospace;font-size:16px">?</span><span style="display:inline-block;width:9.6px;text-align:center;font-family:'Liberation Mono',monospace;font-size:16px">?</span><span style="display:inline-block;width:9.6px;text-align:center;font-family:'Liberation Mono',monospace;font-size:16px">?</span></div>
<div style="left:1px;top:1077px;width:1519px;height:29px;background:#c0c0c0;"></div>
<svg style="left:1px;top:1078px;" width="1520" height="28" viewBox="0 0 1520 28"><path d="M1 28 L5 24 L205 24 L205 4 L209 0 L209 28 Z" fill="#808080"/><path d="M209 28 L213 24 L691 24 L691 4 L695 0 L695 28 Z" fill="#808080"/><path d="M695 28 L699 24 L867 24 L867 4 L871 0 L871 28 Z" fill="#808080"/><path d="M871 28 L875 24 L1515 24 L1515 4 L1519 0 L1519 28 Z" fill="#808080"/></svg>
<div style="left:9px;top:1080px;font-size:17px;line-height:24px;color:#000;font-family:'Liberation Mono',monospace;"><span style="font-size:17px">地</span><span style="font-size:17px">址</span></div>
<div style="left:219px;top:1080px;font-size:17px;line-height:24px;color:#000;font-family:'Liberation Mono',monospace;"><span style="font-size:17px">十</span><span style="font-size:17px">六</span><span style="font-size:17px">进</span><span style="font-size:17px">制</span></div>
<div style="left:704px;top:1080px;font-size:15px;line-height:24px;color:#000;font-family:'Liberation Mono',monospace;">ASCII</div>
<div style="left:207px;top:1106px;width:2px;height:134px;background:#7a7a7a;"></div>
<div style="left:329px;top:1106px;width:2px;height:134px;background:#7a7a7a;"></div>
<div style="left:449px;top:1106px;width:2px;height:134px;background:#7a7a7a;"></div>
<div style="left:569px;top:1106px;width:2px;height:134px;background:#7a7a7a;"></div>
<div style="left:693px;top:1106px;width:2px;height:134px;background:#7a7a7a;"></div>
<div style="left:869px;top:1106px;width:2px;height:134px;background:#7a7a7a;"></div>
<div style="left:1517px;top:1106px;width:2px;height:134px;background:#7a7a7a;"></div>
<div style="left:1519px;top:1077px;width:27px;height:163px;background:#f0f0f0;"></div>
<div style="left:1528px;top:1104px;width:11px;height:25px;background:#858585;"></div>
<div style="left:210px;top:1106px;width:30px;height:18px;background:#c0c0c0;"></div>
<div style="left:704px;top:1106px;width:10px;height:18px;background:#c0c0c0;"></div>
<div style="left:10px;top:1107px;font-size:16px;line-height:18px;color:#000;font-family:'Liberation Mono',monospace;">00007FFED1D91000</div>
<div style="left:217px;top:1107px;font-size:16px;line-height:18px;color:#000;font-family:'Liberation Mono',monospace;">CC</div>
<div style="left:247px;top:1107px;font-size:16px;line-height:18px;color:#000;font-family:'Liberation Mono',monospace;">CC</div>
<div style="left:277px;top:1107px;font-size:16px;line-height:18px;color:#000;font-family:'Liberation Mono',monospace;">CC</div>
<div style="left:307px;top:1107px;font-size:16px;line-height:18px;color:#000;font-family:'Liberation Mono',monospace;">CC</div>
<div style="left:337px;top:1107px;font-size:16px;line-height:18px;color:#000;font-family:'Liberation Mono',monospace;">CC</div>
<div style="left:367px;top:1107px;font-size:16px;line-height:18px;color:#000;font-family:'Liberation Mono',monospace;">CC</div>
<div style="left:397px;top:1107px;font-size:16px;line-height:18px;color:#000;font-family:'Liberation Mono',monospace;">CC</div>
<div style="left:427px;top:1107px;font-size:16px;line-height:18px;color:#000;font-family:'Liberation Mono',monospace;">CC</div>
<div style="left:457px;top:1107px;font-size:16px;line-height:18px;color:#800080;font-family:'Liberation Mono',monospace;">40</div>
<div style="left:487px;top:1107px;font-size:16px;line-height:18px;color:#800080;font-family:'Liberation Mono',monospace;">55</div>
<div style="left:517px;top:1107px;font-size:16px;line-height:18px;color:#800080;font-family:'Liberation Mono',monospace;">53</div>
<div style="left:547px;top:1107px;font-size:16px;line-height:18px;color:#800080;font-family:'Liberation Mono',monospace;">56</div>
<div style="left:577px;top:1107px;font-size:16px;line-height:18px;color:#800080;font-family:'Liberation Mono',monospace;">57</div>
<div style="left:607px;top:1107px;font-size:16px;line-height:18px;color:#800080;font-family:'Liberation Mono',monospace;">41</div>
<div style="left:637px;top:1107px;font-size:16px;line-height:18px;color:#800080;font-family:'Liberation Mono',monospace;">54</div>
<div style="left:667px;top:1107px;font-size:16px;line-height:18px;color:#800080;font-family:'Liberation Mono',monospace;">41</div>
<div style="left:704px;top:1107px;font-size:16px;line-height:18px;color:#000;font-family:'Liberation Mono',monospace;letter-spacing:0.4px"><span style="color:#000">Ì</span><span style="color:#000">Ì</span><span style="color:#000">Ì</span><span style="color:#000">Ì</span><span style="color:#000">Ì</span><span style="color:#000">Ì</span><span style="color:#000">Ì</span><span style="color:#000">Ì</span><span style="color:#800080">@</span><span style="color:#800080">U</span><span style="color:#800080">S</span><span style="color:#800080">V</span><span style="color:#800080">W</span><span style="color:#800080">A</span><span style="color:#800080">T</span><span style="color:#800080">A</span></div>
<div style="left:10px;top:1125px;font-size:16px;line-height:18px;color:#000;font-family:'Liberation Mono',monospace;">00007FFED1D91010</div>
<div style="left:217px;top:1125px;font-size:16px;line-height:18px;color:#800080;font-family:'Liberation Mono',monospace;">56</div>
<div style="left:247px;top:1125px;font-size:16px;line-height:18px;color:#800080;font-family:'Liberation Mono',monospace;">41</div>
<div style="left:277px;top:1125px;font-size:16px;line-height:18px;color:#800080;font-family:'Liberation Mono',monospace;">57</div>
<div style="left:307px;top:1125px;font-size:16px;line-height:18px;color:#800080;font-family:'Liberation Mono',monospace;">48</div>
<div style="left:337px;top:1125px;font-size:16px;line-height:18px;color:#000;font-family:'Liberation Mono',monospace;">8D</div>
<div style="left:367px;top:1125px;font-size:16px;line-height:18px;color:#000;font-family:'Liberation Mono',monospace;">AC</div>
<div style="left:397px;top:1125px;font-size:16px;line-height:18px;color:#800080;font-family:'Liberation Mono',monospace;">24</div>
<div style="left:427px;top:1125px;font-size:16px;line-height:18px;color:#000;font-family:'Liberation Mono',monospace;">90</div>
<div style="left:457px;top:1125px;font-size:16px;line-height:18px;color:#000;font-family:'Liberation Mono',monospace;">FE</div>
<div style="left:487px;top:1125px;font-size:16px;line-height:18px;color:#800000;font-family:'Liberation Mono',monospace;">FF</div>
<div style="left:517px;top:1125px;font-size:16px;line-height:18px;color:#800000;font-family:'Liberation Mono',monospace;">FF</div>
<div style="left:547px;top:1125px;font-size:16px;line-height:18px;color:#800080;font-family:'Liberation Mono',monospace;">48</div>
<div style="left:577px;top:1125px;font-size:16px;line-height:18px;color:#000;font-family:'Liberation Mono',monospace;">81</div>
<div style="left:607px;top:1125px;font-size:16px;line-height:18px;color:#000;font-family:'Liberation Mono',monospace;">EC</div>
<div style="left:637px;top:1125px;font-size:16px;line-height:18px;color:#800080;font-family:'Liberation Mono',monospace;">70</div>
<div style="left:667px;top:1125px;font-size:16px;line-height:18px;color:#000;font-family:'Liberation Mono',monospace;">02</div>
<div style="left:704px;top:1125px;font-size:16px;line-height:18px;color:#000;font-family:'Liberation Mono',monospace;letter-spacing:0.4px"><span style="color:#800080">V</span><span style="color:#800080">A</span><span style="color:#800080">W</span><span style="color:#800080">H</span><span style="color:#000">.</span><span style="color:#000">¬</span><span style="color:#800080">$</span><span style="color:#000">.</span><span style="color:#000">þ</span><span style="color:#800000">ÿ</span><span style="color:#800000">ÿ</span><span style="color:#800080">H</span><span style="color:#000">.</span><span style="color:#000">ì</span><span style="color:#800080">p</span><span style="color:#000">.</span></div>
<div style="left:10px;top:1143px;font-size:16px;line-height:18px;color:#000;font-family:'Liberation Mono',monospace;">00007FFED1D91020</div>
<div style="left:217px;top:1143px;font-size:16px;line-height:18px;color:#008000;font-family:'Liberation Mono',monospace;">00</div>
<div style="left:247px;top:1143px;font-size:16px;line-height:18px;color:#008000;font-family:'Liberation Mono',monospace;">00</div>
<div style="left:277px;top:1143px;font-size:16px;line-height:18px;color:#800080;font-family:'Liberation Mono',monospace;">48</div>
<div style="left:307px;top:1143px;font-size:16px;line-height:18px;color:#000;font-family:'Liberation Mono',monospace;">8B</div>
<div style="left:337px;top:1143px;font-size:16px;line-height:18px;color:#000;font-family:'Liberation Mono',monospace;">05</div>
<div style="left:367px;top:1143px;font-size:16px;line-height:18px;color:#000;font-family:'Liberation Mono',monospace;">07</div>
<div style="left:397px;top:1143px;font-size:16px;line-height:18px;color:#000;font-family:'Liberation Mono',monospace;">D5</div>
<div style="left:427px;top:1143px;font-size:16px;line-height:18px;color:#000;font-family:'Liberation Mono',monospace;">19</div>
<div style="left:457px;top:1143px;font-size:16px;line-height:18px;color:#008000;font-family:'Liberation Mono',monospace;">00</div>
<div style="left:487px;top:1143px;font-size:16px;line-height:18px;color:#800080;font-family:'Liberation Mono',monospace;">48</div>
<div style="left:517px;top:1143px;font-size:16px;line-height:18px;color:#800080;font-family:'Liberation Mono',monospace;">33</div>
<div style="left:547px;top:1143px;font-size:16px;line-height:18px;color:#000;font-family:'Liberation Mono',monospace;">C4</div>
<div style="left:577px;top:1143px;font-size:16px;line-height:18px;color:#800080;font-family:'Liberation Mono',monospace;">48</div>
<div style="left:607px;top:1143px;font-size:16px;line-height:18px;color:#000;font-family:'Liberation Mono',monospace;">89</div>
<div style="left:637px;top:1143px;font-size:16px;line-height:18px;color:#000;font-family:'Liberation Mono',monospace;">85</div>
<div style="left:667px;top:1143px;font-size:16px;line-height:18px;color:#800080;font-family:'Liberation Mono',monospace;">60</div>
<div style="left:704px;top:1143px;font-size:16px;line-height:18px;color:#000;font-family:'Liberation Mono',monospace;letter-spacing:0.4px"><span style="color:#008000">.</span><span style="color:#008000">.</span><span style="color:#800080">H</span><span style="color:#000">.</span><span style="color:#000">.</span><span style="color:#000">.</span><span style="color:#000">Õ</span><span style="color:#000">.</span><span style="color:#008000">.</span><span style="color:#800080">H</span><span style="color:#800080">3</span><span style="color:#000">Ä</span><span style="color:#800080">H</span><span style="color:#000">.</span><span style="color:#000">.</span><span style="color:#800080">`</span></div>
<div style="left:10px;top:1161px;font-size:16px;line-height:18px;color:#000;font-family:'Liberation Mono',monospace;">00007FFED1D91030</div>
<div style="left:217px;top:1161px;font-size:16px;line-height:18px;color:#000;font-family:'Liberation Mono',monospace;">01</div>
<div style="left:247px;top:1161px;font-size:16px;line-height:18px;color:#008000;font-family:'Liberation Mono',monospace;">00</div>
<div style="left:277px;top:1161px;font-size:16px;line-height:18px;color:#008000;font-family:'Liberation Mono',monospace;">00</div>
<div style="left:307px;top:1161px;font-size:16px;line-height:18px;color:#000;font-family:'Liberation Mono',monospace;">0F</div>
<div style="left:337px;top:1161px;font-size:16px;line-height:18px;color:#000;font-family:'Liberation Mono',monospace;">B7</div>
<div style="left:367px;top:1161px;font-size:16px;line-height:18px;color:#000;font-family:'Liberation Mono',monospace;">1A</div>
<div style="left:397px;top:1161px;font-size:16px;line-height:18px;color:#000;font-family:'Liberation Mono',monospace;">B8</div>
<div style="left:427px;top:1161px;font-size:16px;line-height:18px;color:#008000;font-family:'Liberation Mono',monospace;">00</div>
<div style="left:457px;top:1161px;font-size:16px;line-height:18px;color:#000;font-family:'Liberation Mono',monospace;">02</div>
<div style="left:487px;top:1161px;font-size:16px;line-height:18px;color:#008000;font-family:'Liberation Mono',monospace;">00</div>
<div style="left:517px;top:1161px;font-size:16px;line-height:18px;color:#008000;font-family:'Liberation Mono',monospace;">00</div>
<div style="left:547px;top:1161px;font-size:16px;line-height:18px;color:#800080;font-family:'Liberation Mono',monospace;">41</div>
<div style="left:577px;top:1161px;font-size:16px;line-height:18px;color:#000;font-family:'Liberation Mono',monospace;">8B</div>
<div style="left:607px;top:1161px;font-size:16px;line-height:18px;color:#000;font-family:'Liberation Mono',monospace;">F9</div>
<div style="left:637px;top:1161px;font-size:16px;line-height:18px;color:#800080;font-family:'Liberation Mono',monospace;">49</div>
<div style="left:667px;top:1161px;font-size:16px;line-height:18px;color:#000;font-family:'Liberation Mono',monospace;">8B</div>
<div style="left:704px;top:1161px;font-size:16px;line-height:18px;color:#000;font-family:'Liberation Mono',monospace;letter-spacing:0.4px"><span style="color:#000">.</span><span style="color:#008000">.</span><span style="color:#008000">.</span><span style="color:#000">.</span><span style="color:#000">·</span><span style="color:#000">.</span><span style="color:#000">¸</span><span style="color:#008000">.</span><span style="color:#000">.</span><span style="color:#008000">.</span><span style="color:#008000">.</span><span style="color:#800080">A</span><span style="color:#000">.</span><span style="color:#000">ù</span><span style="color:#800080">I</span><span style="color:#000">.</span></div>
<div style="left:10px;top:1179px;font-size:16px;line-height:18px;color:#000;font-family:'Liberation Mono',monospace;">00007FFED1D91040</div>
<div style="left:217px;top:1179px;font-size:16px;line-height:18px;color:#000;font-family:'Liberation Mono',monospace;">F0</div>
<div style="left:247px;top:1179px;font-size:16px;line-height:18px;color:#800080;font-family:'Liberation Mono',monospace;">4C</div>
<div style="left:277px;top:1179px;font-size:16px;line-height:18px;color:#000;font-family:'Liberation Mono',monospace;">8B</div>
<div style="left:307px;top:1179px;font-size:16px;line-height:18px;color:#000;font-family:'Liberation Mono',monospace;">F1</div>
<div style="left:337px;top:1179px;font-size:16px;line-height:18px;color:#800080;font-family:'Liberation Mono',monospace;">66</div>
<div style="left:367px;top:1179px;font-size:16px;line-height:18px;color:#800080;font-family:'Liberation Mono',monospace;">3B</div>
<div style="left:397px;top:1179px;font-size:16px;line-height:18px;color:#000;font-family:'Liberation Mono',monospace;">D8</div>
<div style="left:427px;top:1179px;font-size:16px;line-height:18px;color:#000;font-family:'Liberation Mono',monospace;">0F</div>
<div style="left:457px;top:1179px;font-size:16px;line-height:18px;color:#000;font-family:'Liberation Mono',monospace;">83</div>
<div style="left:487px;top:1179px;font-size:16px;line-height:18px;color:#800080;font-family:'Liberation Mono',monospace;">53</div>
<div style="left:517px;top:1179px;font-size:16px;line-height:18px;color:#000;font-family:'Liberation Mono',monospace;">11</div>
<div style="left:547px;top:1179px;font-size:16px;line-height:18px;color:#000;font-family:'Liberation Mono',monospace;">0B</div>
<div style="left:577px;top:1179px;font-size:16px;line-height:18px;color:#008000;font-family:'Liberation Mono',monospace;">00</div>
<div style="left:607px;top:1179px;font-size:16px;line-height:18px;color:#800080;font-family:'Liberation Mono',monospace;">48</div>
<div style="left:637px;top:1179px;font-size:16px;line-height:18px;color:#000;font-family:'Liberation Mono',monospace;">8B</div>
<div style="left:667px;top:1179px;font-size:16px;line-height:18px;color:#800080;font-family:'Liberation Mono',monospace;">52</div>
<div style="left:704px;top:1179px;font-size:16px;line-height:18px;color:#000;font-family:'Liberation Mono',monospace;letter-spacing:0.4px"><span style="color:#000">ð</span><span style="color:#800080">L</span><span style="color:#000">.</span><span style="color:#000">ñ</span><span style="color:#800080">f</span><span style="color:#800080">;</span><span style="color:#000">Ø</span><span style="color:#000">.</span><span style="color:#000">.</span><span style="color:#800080">S</span><span style="color:#000">.</span><span style="color:#000">.</span><span style="color:#008000">.</span><span style="color:#800080">H</span><span style="color:#000">.</span><span style="color:#800080">R</span></div>
<div style="left:10px;top:1197px;font-size:16px;line-height:18px;color:#000;font-family:'Liberation Mono',monospace;">00007FFED1D91050</div>
<div style="left:217px;top:1197px;font-size:16px;line-height:18px;color:#000;font-family:'Liberation Mono',monospace;">08</div>
<div style="left:247px;top:1197px;font-size:16px;line-height:18px;color:#800080;font-family:'Liberation Mono',monospace;">4C</div>
<div style="left:277px;top:1197px;font-size:16px;line-height:18px;color:#000;font-family:'Liberation Mono',monospace;">8D</div>
<div style="left:307px;top:1197px;font-size:16px;line-height:18px;color:#800080;font-family:'Liberation Mono',monospace;">44</div>
<div style="left:337px;top:1197px;font-size:16px;line-height:18px;color:#800080;font-family:'Liberation Mono',monospace;">24</div>
<div style="left:367px;top:1197px;font-size:16px;line-height:18px;color:#800080;font-family:'Liberation Mono',monospace;">50</div>
<div style="left:397px;top:1197px;font-size:16px;line-height:18px;color:#800080;font-family:'Liberation Mono',monospace;">44</div>
<div style="left:427px;top:1197px;font-size:16px;line-height:18px;color:#000;font-family:'Liberation Mono',monospace;">0F</div>
<div style="left:457px;top:1197px;font-size:16px;line-height:18px;color:#000;font-family:'Liberation Mono',monospace;">B7</div>
<div style="left:487px;top:1197px;font-size:16px;line-height:18px;color:#000;font-family:'Liberation Mono',monospace;">CB</div>
<div style="left:517px;top:1197px;font-size:16px;line-height:18px;color:#000;font-family:'Liberation Mono',monospace;">E8</div>
<div style="left:547px;top:1197px;font-size:16px;line-height:18px;color:#000;font-family:'Liberation Mono',monospace;">F1</div>
<div style="left:577px;top:1197px;font-size:16px;line-height:18px;color:#000;font-family:'Liberation Mono',monospace;">01</div>
<div style="left:607px;top:1197px;font-size:16px;line-height:18px;color:#008000;font-family:'Liberation Mono',monospace;">00</div>
<div style="left:637px;top:1197px;font-size:16px;line-height:18px;color:#008000;font-family:'Liberation Mono',monospace;">00</div>
<div style="left:667px;top:1197px;font-size:16px;line-height:18px;color:#800080;font-family:'Liberation Mono',monospace;">45</div>
<div style="left:704px;top:1197px;font-size:16px;line-height:18px;color:#000;font-family:'Liberation Mono',monospace;letter-spacing:0.4px"><span style="color:#000">.</span><span style="color:#800080">L</span><span style="color:#000">.</span><span style="color:#800080">D</span><span style="color:#800080">$</span><span style="color:#800080">P</span><span style="color:#800080">D</span><span style="color:#000">.</span><span style="color:#000">·</span><span style="color:#000">Ë</span><span style="color:#000">è</span><span style="color:#000">ñ</span><span style="color:#000">.</span><span style="color:#008000">.</span><span style="color:#008000">.</span><span style="color:#800080">E</span></div>
<div style="left:10px;top:1215px;font-size:16px;line-height:18px;color:#000;font-family:'Liberation Mono',monospace;">00007FFED1D91060</div>
<div style="left:217px;top:1215px;font-size:16px;line-height:18px;color:#800080;font-family:'Liberation Mono',monospace;">33</div>
<div style="left:247px;top:1215px;font-size:16px;line-height:18px;color:#800000;font-family:'Liberation Mono',monospace;">FF</div>
<div style="left:277px;top:1215px;font-size:16px;line-height:18px;color:#000;font-family:'Liberation Mono',monospace;">85</div>
<div style="left:307px;top:1215px;font-size:16px;line-height:18px;color:#000;font-family:'Liberation Mono',monospace;">C0</div>
<div style="left:337px;top:1215px;font-size:16px;line-height:18px;color:#800080;font-family:'Liberation Mono',monospace;">78</div>
<div style="left:367px;top:1215px;font-size:16px;line-height:18px;color:#800080;font-family:'Liberation Mono',monospace;">7A</div>
<div style="left:397px;top:1215px;font-size:16px;line-height:18px;color:#800080;font-family:'Liberation Mono',monospace;">66</div>
<div style="left:427px;top:1215px;font-size:16px;line-height:18px;color:#800080;font-family:'Liberation Mono',monospace;">44</div>
<div style="left:457px;top:1215px;font-size:16px;line-height:18px;color:#000;font-family:'Liberation Mono',monospace;">89</div>
<div style="left:487px;top:1215px;font-size:16px;line-height:18px;color:#000;font-family:'Liberation Mono',monospace;">BD</div>
<div style="left:517px;top:1215px;font-size:16px;line-height:18px;color:#800080;font-family:'Liberation Mono',monospace;">50</div>
<div style="left:547px;top:1215px;font-size:16px;line-height:18px;color:#000;font-family:'Liberation Mono',monospace;">01</div>
<div style="left:577px;top:1215px;font-size:16px;line-height:18px;color:#008000;font-family:'Liberation Mono',monospace;">00</div>
<div style="left:607px;top:1215px;font-size:16px;line-height:18px;color:#008000;font-family:'Liberation Mono',monospace;">00</div>
<div style="left:637px;top:1215px;font-size:16px;line-height:18px;color:#000;font-family:'Liberation Mono',monospace;">85</div>
<div style="left:667px;top:1215px;font-size:16px;line-height:18px;color:#800000;font-family:'Liberation Mono',monospace;">FF</div>
<div style="left:704px;top:1215px;font-size:16px;line-height:18px;color:#000;font-family:'Liberation Mono',monospace;letter-spacing:0.4px"><span style="color:#800080">3</span><span style="color:#800000">ÿ</span><span style="color:#000">.</span><span style="color:#000">À</span><span style="color:#800080">x</span><span style="color:#800080">z</span><span style="color:#800080">f</span><span style="color:#800080">D</span><span style="color:#000">.</span><span style="color:#000">½</span><span style="color:#800080">P</span><span style="color:#000">.</span><span style="color:#008000">.</span><span style="color:#008000">.</span><span style="color:#000">.</span><span style="color:#800000">ÿ</span></div>
<div style="left:10px;top:1233px;font-size:16px;line-height:18px;color:#000;font-family:'Liberation Mono',monospace;">00007FFED1D91070</div>
<div style="left:217px;top:1233px;font-size:16px;line-height:18px;color:#000;font-family:'Liberation Mono',monospace;">0F</div>
<div style="left:247px;top:1233px;font-size:16px;line-height:18px;color:#000;font-family:'Liberation Mono',monospace;">85</div>
<div style="left:277px;top:1233px;font-size:16px;line-height:18px;color:#800080;font-family:'Liberation Mono',monospace;">31</div>
<div style="left:307px;top:1233px;font-size:16px;line-height:18px;color:#000;font-family:'Liberation Mono',monospace;">11</div>
<div style="left:337px;top:1233px;font-size:16px;line-height:18px;color:#000;font-family:'Liberation Mono',monospace;">0B</div>
<div style="left:367px;top:1233px;font-size:16px;line-height:18px;color:#008000;font-family:'Liberation Mono',monospace;">00</div>
<div style="left:397px;top:1233px;font-size:16px;line-height:18px;color:#800080;font-family:'Liberation Mono',monospace;">48</div>
<div style="left:427px;top:1233px;font-size:16px;line-height:18px;color:#000;font-family:'Liberation Mono',monospace;">8D</div>
<div style="left:457px;top:1233px;font-size:16px;line-height:18px;color:#800080;font-family:'Liberation Mono',monospace;">44</div>
<div style="left:487px;top:1233px;font-size:16px;line-height:18px;color:#800080;font-family:'Liberation Mono',monospace;">24</div>
<div style="left:517px;top:1233px;font-size:16px;line-height:18px;color:#800080;font-family:'Liberation Mono',monospace;">50</div>
<div style="left:547px;top:1233px;font-size:16px;line-height:18px;color:#800080;font-family:'Liberation Mono',monospace;">66</div>
<div style="left:577px;top:1233px;font-size:16px;line-height:18px;color:#000;font-family:'Liberation Mono',monospace;">89</div>
<div style="left:607px;top:1233px;font-size:16px;line-height:18px;color:#800080;font-family:'Liberation Mono',monospace;">5C</div>
<div style="left:637px;top:1233px;font-size:16px;line-height:18px;color:#800080;font-family:'Liberation Mono',monospace;">24</div>
<div style="left:667px;top:1233px;font-size:16px;line-height:18px;color:#800080;font-family:'Liberation Mono',monospace;">42</div>
<div style="left:704px;top:1233px;font-size:16px;line-height:18px;color:#000;font-family:'Liberation Mono',monospace;letter-spacing:0.4px"><span style="color:#000">.</span><span style="color:#000">.</span><span style="color:#800080">1</span><span style="color:#000">.</span><span style="color:#000">.</span><span style="color:#008000">.</span><span style="color:#800080">H</span><span style="color:#000">.</span><span style="color:#800080">D</span><span style="color:#800080">$</span><span style="color:#800080">P</span><span style="color:#800080">f</span><span style="color:#000">.</span><span style="color:#800080">\</span><span style="color:#800080">$</span><span style="color:#800080">B</span></div>
</body></html>
